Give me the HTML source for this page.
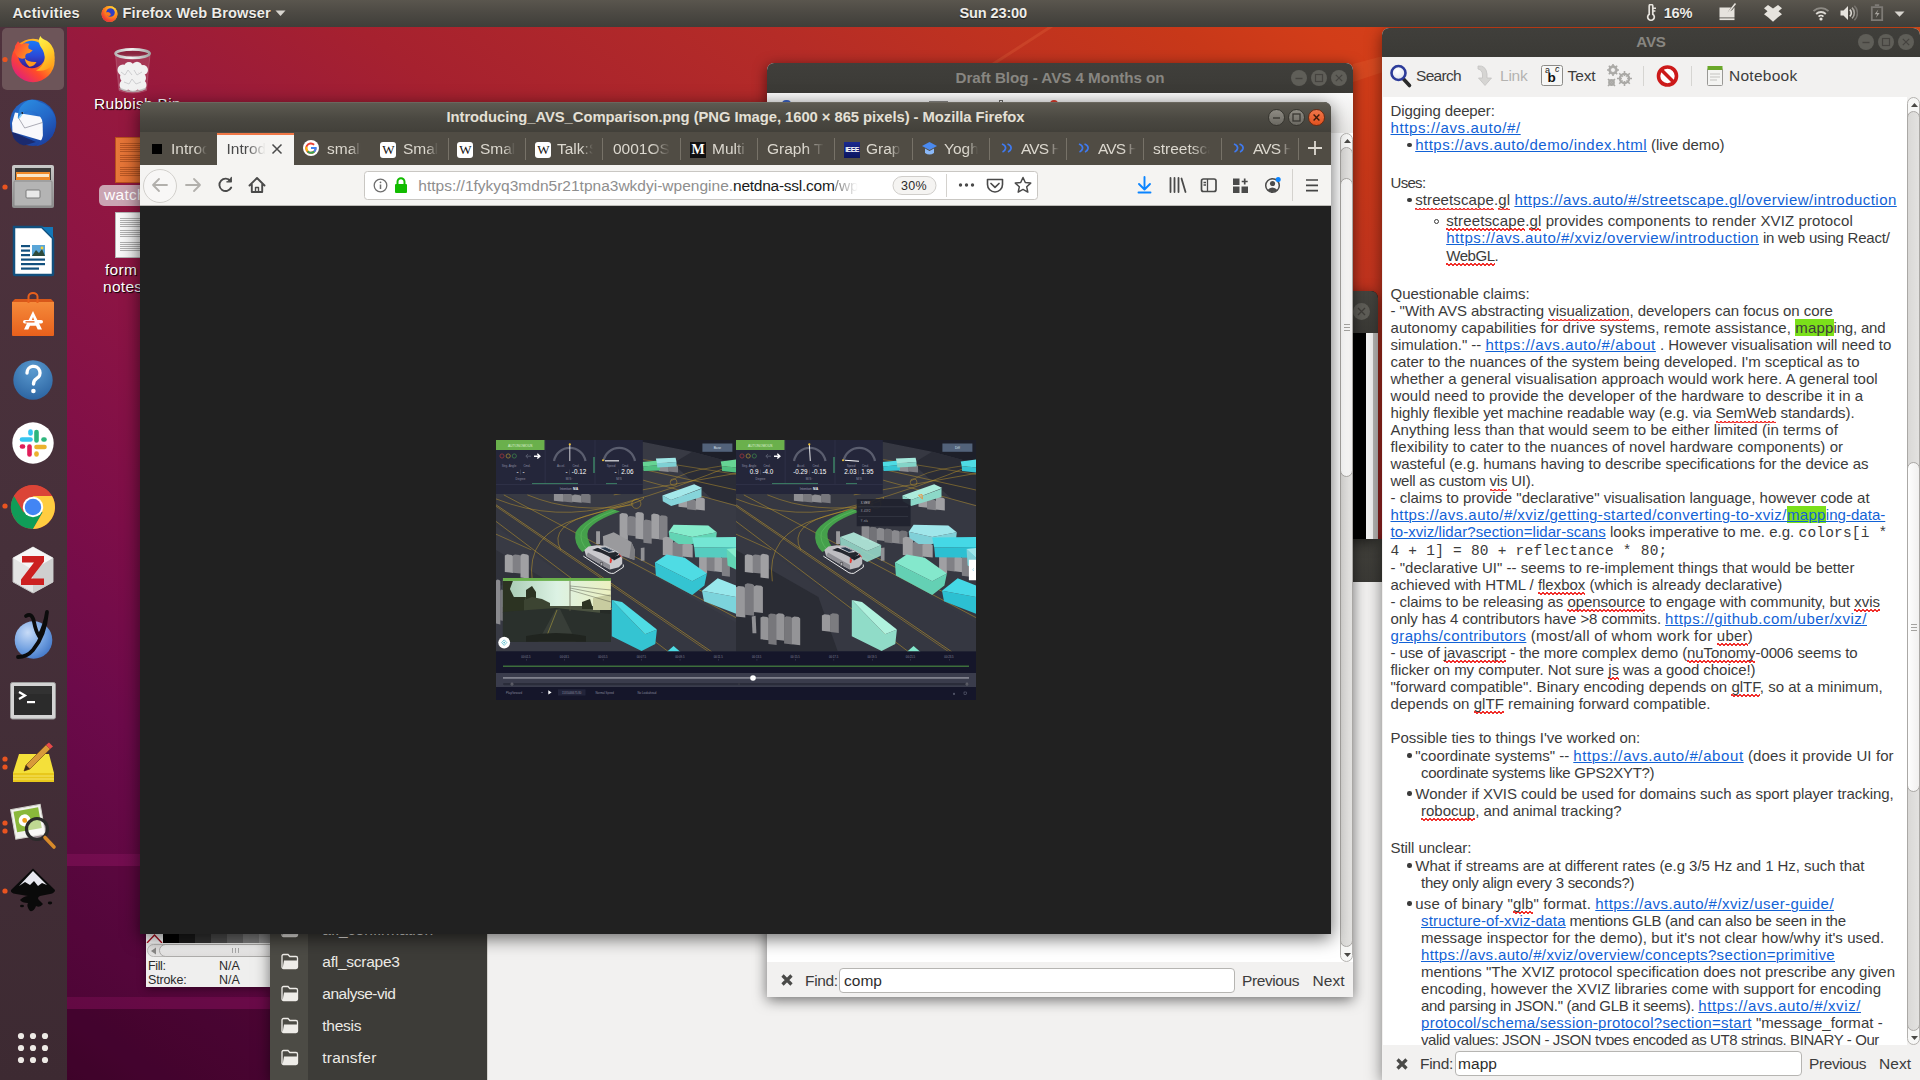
<!DOCTYPE html>
<html><head><meta charset="utf-8"><title>desktop</title>
<style>
*{box-sizing:border-box;margin:0;padding:0}
html,body{width:1920px;height:1080px;overflow:hidden;background:#5a0a3c;font-family:"Liberation Sans",sans-serif;}
.abs{position:absolute}
#wall{position:absolute;left:0;top:0;width:1920px;height:1080px;
 background:linear-gradient(36deg,#47042f 0%,#54063a 5%,#6c0a4a 18%,#7d0e48 26%,#8c1444 35%,#97193e 44%,#a6212f 53%,#b52c27 65%,#c83819 77%,#d23d19 81%,#e04e1a 100%);}
#topbar{position:absolute;left:0;top:0;width:1920px;height:27px;background:linear-gradient(#5a564e 0%,#4d4a44 45%,#3f3e39 100%);color:#eeece8;font-weight:bold;font-size:14.600px;z-index:100}
#topbar span{position:absolute;top:5px;white-space:nowrap;text-shadow:0 1px 1px rgba(0,0,0,.6)}
#dock{position:absolute;left:0;top:27px;width:67px;height:1053px;background:#4a2f39;z-index:99}
.win{position:absolute;box-shadow:0 3px 14px rgba(0,0,0,.55)}
.tb{position:absolute;left:0;top:0;right:0;border-radius:7px 7px 0 0;color:#dfdbd2;font-weight:bold;font-size:15px;text-align:center}
.wbtn{position:absolute;width:17px;height:17px;border-radius:50%;background:#6b6962;border:1px solid #2c2b28}
</style></head><body>
<div id="wall"></div>
<!-- wallpaper bands -->
<div class="abs" style="left:67px;top:854px;width:420px;height:12px;background:rgba(160,30,110,.28)"></div>
<div class="abs" style="left:67px;top:866px;width:420px;height:214px;background:rgba(40,0,30,.12)"></div>
<div class="abs" style="left:67px;top:997px;width:420px;height:12px;background:rgba(150,20,100,.30)"></div>
<div class="abs" style="left:67px;top:1009px;width:420px;height:71px;background:rgba(30,0,20,.22)"></div>
<svg class="abs" id="ray1" style="left:0;top:0" width="1920" height="300"><path d="M990 66 L1052 26" stroke="rgba(255,150,90,.16)" stroke-width="3"/><path d="M1353 64 L1383 56 V72 L1353 82Z" fill="rgba(255,160,90,.12)"/></svg>
<!-- desktop icons -->
<svg class="abs" style="left:110px;top:45px" width="46" height="50" viewBox="110 45 46 50">
<defs><linearGradient id="rimg" x1="0" x2="1"><stop offset="0" stop-color="#b8b8b8"/><stop offset=".45" stop-color="#f4f4f4"/><stop offset="1" stop-color="#a4a4a4"/></linearGradient></defs>
<path d="M115.500 55 L119 90.500 Q132.700 95.500 146.500 90.500 L150 55Z" fill="rgba(255,255,255,.13)" stroke="rgba(255,255,255,.22)" stroke-width=".7"/>
<g fill="#f1f1f1"><circle cx="123" cy="70" r="5.500"/><circle cx="129" cy="67" r="5"/><circle cx="137" cy="67" r="5.200"/><circle cx="143" cy="70" r="5"/><circle cx="126" cy="77" r="6"/><circle cx="133" cy="74" r="6"/><circle cx="140" cy="78" r="6"/><circle cx="125" cy="85" r="5.500"/><circle cx="133" cy="85" r="6.500"/><circle cx="141" cy="85" r="5.500"/></g>
<g fill="none" stroke="#c9c9cc" stroke-width=".9"><path d="M121 72 l4 3 l3 -5 l4 5 M134 70 l3 5 l5 -3 M124 82 l5 2 l3 -5 l4 5 l5 -2"/></g>
<path d="M119.500 88.500 Q132.700 94.500 146 88.500" fill="none" stroke="#b9b9b9" stroke-width="1.600" opacity=".8"/>
<ellipse cx="132.600" cy="53.600" rx="17" ry="4.300" fill="rgba(125,45,65,.55)" stroke="url(#rimg)" stroke-width="2.800"/>
</svg>
<div class="abs" style="left:94px;top:95px;color:#fff;font-size:15.500px;white-space:nowrap;text-shadow:1px 1px 1px #000;letter-spacing:.3px">Rubbish Bin</div>
<div class="abs" style="left:115px;top:137px;width:40px;height:46px;background:linear-gradient(90deg,#e8783a,#d8652a);border:1px solid #b8501c"></div>
<div class="abs" style="left:120px;top:143px;width:30px;height:34px;background:repeating-linear-gradient(#8a3a12 0 1px,transparent 1px 2px);opacity:.5;-webkit-mask-image:linear-gradient(#000 0 26%,transparent 26% 33%,#000 33% 60%,transparent 60% 67%,#000 67%)"></div>
<div class="abs" style="left:99px;top:185px;width:70px;height:21px;border-radius:5px;background:rgba(222,214,217,.74);color:#fff;font-size:15.500px;padding:1px 5px;letter-spacing:.3px">watch</div>
<div class="abs" style="left:115px;top:212px;width:40px;height:46px;background:linear-gradient(90deg,#fafafa,#e4e4e4);border:1px solid #b4b4b4"></div>
<div class="abs" style="left:120px;top:218px;width:30px;height:34px;background:repeating-linear-gradient(#6a6a6a 0 1px,transparent 1px 2px);opacity:.5;-webkit-mask-image:linear-gradient(#000 0 26%,transparent 26% 33%,#000 33% 60%,transparent 60% 67%,#000 67%)"></div>
<div class="abs" style="left:105px;top:261px;color:#fff;font-size:15.500px;white-space:nowrap;text-shadow:1px 1px 1px #000;letter-spacing:.3px">form</div>
<div class="abs" style="left:103px;top:278px;color:#fff;font-size:15.500px;white-space:nowrap;text-shadow:1px 1px 1px #000;letter-spacing:.3px">notes</div>
<!-- inkscape fragment -->
<div class="abs" style="left:146px;top:920px;width:124px;height:67px;background:#efefee;box-shadow:0 2px 8px rgba(0,0,0,.4)">
 <div class="abs" style="left:0;top:14px;width:17px;height:9px;background:#fff"></div>
 <svg class="abs" style="left:0;top:12px" width="17" height="11"><path d="M1 11 L8.500 3 L16 11" stroke="#b01020" stroke-width="1.400" fill="none"/></svg>
 <div class="abs" style="left:17px;top:14px;width:16px;height:9px;background:#000"></div>
 <div class="abs" style="left:33px;top:14px;width:16px;height:9px;background:#1a1a1a"></div>
 <div class="abs" style="left:49px;top:14px;width:16px;height:9px;background:#333"></div>
 <div class="abs" style="left:65px;top:14px;width:16px;height:9px;background:#4d4d4d"></div>
 <div class="abs" style="left:81px;top:14px;width:16px;height:9px;background:#666"></div>
 <div class="abs" style="left:97px;top:14px;width:16px;height:9px;background:#808080"></div>
 <div class="abs" style="left:113px;top:14px;width:11px;height:9px;background:#999"></div>
 <div class="abs" style="left:1px;top:24px;width:130px;height:13px;border-radius:7px;background:#e4e3e2;border:1px solid #bdbcba"></div>
 <div class="abs" style="left:13px;top:24px;width:130px;height:13px;border-radius:7px;background:linear-gradient(#fafafa,#e0dfde);border:1px solid #aeadab"></div>
 <svg class="abs" style="left:4px;top:27px" width="7" height="8"><path d="M6 0.500 L1 4 L6 7.500Z" fill="#8a8987"/></svg>
 <div class="abs" style="left:86px;top:28px;width:8px;height:5px;background:repeating-linear-gradient(90deg,#aaa 0 1px,transparent 1px 3px)"></div>
 <div class="abs" style="left:2px;top:39px;font-size:12.500px;color:#2a2a2a;white-space:nowrap;letter-spacing:-0.371px">Fill:</div>
 <div class="abs" style="left:73px;top:39px;font-size:12.500px;color:#2a2a2a;white-space:nowrap;letter-spacing:-0.015px">N/A</div>
 <div class="abs" style="left:2px;top:53px;font-size:12.500px;color:#2a2a2a;white-space:nowrap;letter-spacing:-0.144px">Stroke:</div>
 <div class="abs" style="left:73px;top:53px;font-size:12.500px;color:#2a2a2a;white-space:nowrap;letter-spacing:-0.015px">N/A</div>
</div>
<!-- file manager -->
<div class="win" style="left:270px;top:539px;width:1140px;height:541px;background:#f2f1f0">
 <div class="abs" style="left:0;top:0;width:1140px;height:43px;background:linear-gradient(#42413c,#3b3a36);border-radius:6px 6px 0 0"></div>
 <div class="abs" style="left:0;top:43px;width:38px;height:498px;background:#4c4b45"></div>
 <div class="abs" style="left:38px;top:43px;width:179px;height:498px;background:#3d3c38"></div>
 <div class="abs" style="left:217px;top:43px;width:1px;height:498px;background:#d5d3cf"></div>
</div>
<svg class="abs" style="left:270px;top:900px" width="217" height="180" viewBox="270 900 217 180">
<defs><g id="fold"><path d="M0.500 2 a1.500 1.500 0 0 1 1.500 -1.500 h4.500 l1.800 2 h6.200 a1.500 1.500 0 0 1 1.500 1.500 v9 a1.500 1.500 0 0 1 -1.500 1.500 h-12.500 a1.500 1.500 0 0 1 -1.500 -1.500z" fill="none" stroke="#eeece8" stroke-width="1.300"/><path d="M2.500 6.500 h13.500 v7.500 h-14.800 z" fill="#eeece8"/></g></defs>
<use href="#fold" x="281.500" y="922"/><use href="#fold" x="281.500" y="954"/><use href="#fold" x="281.500" y="986"/><use href="#fold" x="281.500" y="1018"/><use href="#fold" x="281.500" y="1050"/>
</svg>
<div class="abs" style="left:322.300px;top:921.0px;font-size:15.500px;color:#eceae6;white-space:nowrap;letter-spacing:0.099px">afl_confirmation</div>
<div class="abs" style="left:322.300px;top:953.0px;font-size:15.500px;color:#eceae6;white-space:nowrap;letter-spacing:-0.249px">afl_scrape3</div>
<div class="abs" style="left:322.300px;top:985.0px;font-size:15.500px;color:#eceae6;white-space:nowrap;letter-spacing:-0.482px">analyse-vid</div>
<div class="abs" style="left:322.300px;top:1017.0px;font-size:15.500px;color:#eceae6;white-space:nowrap;letter-spacing:-0.250px">thesis</div>
<div class="abs" style="left:322.300px;top:1049.0px;font-size:15.500px;color:#eceae6;white-space:nowrap;letter-spacing:0.217px">transfer</div>
<!-- black window -->
<div class="win" style="left:1200px;top:291px;width:178px;height:248px;background:#000;border-radius:7px 7px 0 0">
 <div class="abs" style="left:0;top:0;width:178px;height:42px;background:linear-gradient(#45443f,#3a3935);border-radius:7px 7px 0 0"></div>
 <div class="abs" style="left:153px;top:12px;width:17px;height:17px;border-radius:50%;background:#5f5e58"></div>
 <svg class="abs" style="left:157px;top:16px" width="9" height="9"><path d="M1 1 L8 8 M8 1 L1 8" stroke="#403e3a" stroke-width="1.300"/></svg>
 <div class="abs" style="left:166px;top:42px;width:7px;height:206px;background:#f4f4f4"></div>
 <div class="abs" style="left:172.500px;top:42px;width:5.500px;height:206px;background:#b4b3b1"></div>
</div>
<!-- Draft Blog window -->
<div class="win" style="left:767px;top:63px;width:586px;height:934px;background:#fff;border-radius:7px 7px 0 0">
 <div class="tb" style="height:30px;background:linear-gradient(#403f3b,#3b3a36);color:#888681;font-size:15.200px;line-height:30px;"><span style="letter-spacing:-0.039px">Draft Blog - AVS 4 Months on</span></div>
 <div class="abs" style="left:524px;top:7px;width:16px;height:16px;border-radius:50%;background:#5f5e58"></div>
 <div class="abs" style="left:544px;top:7px;width:16px;height:16px;border-radius:50%;background:#5f5e58"></div>
 <div class="abs" style="left:564px;top:7px;width:16px;height:16px;border-radius:50%;background:#5f5e58"></div>
 <svg class="abs" style="left:523px;top:7px" width="60" height="16"><path d="M5.500 8.500 h7" stroke="#45433f" stroke-width="1.400"/><rect x="25.500" y="4.500" width="7" height="7" fill="none" stroke="#45433f" stroke-width="1.200"/><path d="M45.800 4.800 l6.400 6.400 M52.200 4.800 l-6.400 6.400" stroke="#45433f" stroke-width="1.200"/></svg>
 <div class="abs" style="left:0;top:30px;width:586px;height:40px;background:linear-gradient(#fafafa,#e9e8e6)"></div>
 <div class="abs" style="left:15px;top:36.500px;width:9px;height:4px;border-radius:4px 4px 0 0;background:#3a62c4"></div>
 <div class="abs" style="left:162px;top:37.500px;width:19px;height:3px;background:#8a8986"></div>
 <div class="abs" style="left:232px;top:36.500px;width:4px;height:4px;border:1px solid #6a6966"></div>
 <div class="abs" style="left:283px;top:37px;width:8px;height:4px;border-radius:4px 4px 0 0;background:#d83a2a"></div>
 <div class="abs" style="left:0;top:899px;width:586px;height:35px;background:#f2f1f0"></div>
 <!-- scrollbar -->
 <div class="abs" style="left:573px;top:70px;width:13px;height:829px;background:#f7f7f6;border:1px solid #b4b2af;border-radius:6.500px"></div>
 <div class="abs" style="left:573px;top:84px;width:13px;height:800px;background:linear-gradient(90deg,#d9d8d6,#e3e2e0);border:1px solid #aaa8a5;border-radius:6.500px"></div>
 <svg class="abs" style="left:576.500px;top:75.500px" width="7" height="4"><path d="M0 4 L3.500 0 L7 4Z" fill="#4a4946"/></svg>
 <div class="abs" style="left:573px;top:115px;width:13px;height:299px;border-radius:6.500px;background:linear-gradient(90deg,#fdfdfd,#f1f0ef);border:1px solid #aaa8a5"></div>
 <div class="abs" style="left:576.500px;top:261px;width:6px;height:8px;background:repeating-linear-gradient(#a4a3a0 0 1px,transparent 1px 3px)"></div>
 <svg class="abs" style="left:576.500px;top:889.500px" width="7" height="4"><path d="M0 0 L3.500 4 L7 0Z" fill="#4a4946"/></svg>
 <!-- find bar -->
 <svg class="abs" style="left:14px;top:911px" width="12" height="12"><path d="M1.500 1.500 L10.500 10.500 M10.500 1.500 L1.500 10.500" stroke="#4a4a48" stroke-width="3.200"/></svg>
 <div class="abs" style="left:38px;top:909px;font-size:15.500px;color:#3c3c3c;white-space:nowrap;letter-spacing:-0.334px">Find:</div>
 <div class="abs" style="left:72px;top:905px;width:396px;height:25px;border:1px solid #b6b5b2;border-radius:4px;background:#fff;font-size:15.500px;color:#2c2c2c;padding:3px 0 0 4px"><span style="letter-spacing:0.023px">comp</span></div>
 <div class="abs" style="left:475px;top:909px;font-size:15.500px;color:#3c3c3c;white-space:nowrap;letter-spacing:-0.414px">Previous</div>
 <div class="abs" style="left:545.500px;top:909px;font-size:15.500px;color:#3c3c3c;white-space:nowrap;letter-spacing:0.031px">Next</div>
</div>
<!-- Firefox window -->
<style>
.tab{position:absolute;top:0;height:33px;width:77px;font-size:15.500px;color:#dcd8cf;white-space:nowrap;overflow:hidden}
.tab .t{position:absolute;top:8px;-webkit-mask-image:linear-gradient(90deg,#000 68%,transparent 100%);mask-image:linear-gradient(90deg,#000 68%,transparent 100%);overflow:hidden}
.tsep{position:absolute;top:6px;width:1px;height:22px;background:#777268}
.wico{position:absolute;top:9.500px;width:16px;height:16px;border-radius:3px;background:#fff;color:#111;font-family:"Liberation Serif",serif;font-size:13px;line-height:16px;text-align:center;letter-spacing:-1px}
</style>
<div class="win" style="left:140px;top:102px;width:1191px;height:832px;background:#212121;border-radius:7px 7px 0 0;box-shadow:0 4px 18px rgba(0,0,0,.6)">
 <div class="tb" style="height:30px;background:linear-gradient(#5d5a51,#4a4841 55%,#42403a);color:#e4e0d6;font-size:14.800px;line-height:29px;border-top:1px solid #6a675e"><span style="letter-spacing:-0.054px">Introducing_AVS_Comparison.png (PNG Image, 1600 × 865 pixels) - Mozilla Firefox</span></div>
 <!-- window buttons -->
 <div class="abs" style="left:1128px;top:6.700px;width:17px;height:17px;border-radius:50%;background:linear-gradient(#8e8b83,#6b6962);border:1px solid #36352f"></div>
 <div class="abs" style="left:1148px;top:6.700px;width:17px;height:17px;border-radius:50%;background:linear-gradient(#8e8b83,#6b6962);border:1px solid #36352f"></div>
 <div class="abs" style="left:1168px;top:6.700px;width:17px;height:17px;border-radius:50%;background:linear-gradient(#f0764a,#e2521f);border:1px solid #6a2a12"></div>
 <svg class="abs" style="left:1128px;top:6.700px" width="60" height="17"><path d="M5 9 h7" stroke="#3a3833" stroke-width="1.400"/><rect x="25" y="5" width="7" height="7" fill="none" stroke="#3a3833" stroke-width="1.300"/><path d="M45.600 5.600 l5.800 5.800 M51.400 5.600 l-5.800 5.800" stroke="#3c1a0a" stroke-width="1.400"/></svg>
 <!-- tab bar -->
 <div class="abs" style="left:0;top:30px;width:1191px;height:33px;background:#504c44"></div>
 <div class="abs" style="left:0;top:30px;width:1191px;height:33px">
  <div class="tab" style="left:0"><div class="abs" style="left:12px;top:12px;width:10px;height:10px;background:#000"></div><div class="t" style="left:31px;width:36px">Introducing</div></div>
  <div class="tab" style="left:77px;top:1px;height:32px;background:#f5f4f2;color:#4a4a4a;border-top:2px solid #f07746"><div class="t" style="left:9.500px;width:40px;top:5px;-webkit-mask-image:linear-gradient(90deg,#000 50%,transparent 96%)">Introducing</div><svg class="abs" style="left:54px;top:8px" width="12" height="12"><path d="M1.500 1.500 L10.500 10.500 M10.500 1.500 L1.500 10.500" stroke="#4a4a4a" stroke-width="1.500"/></svg></div>
  <div class="tab" style="left:154px"><svg class="abs" style="left:9px;top:8px" width="16" height="16" viewBox="0 0 16 16"><circle cx="8" cy="8" r="8" fill="#fff"/><path d="M12.600 8.200 a4.700 4.700 0 1 1 -1.500 -3.500" fill="none" stroke="#ea4335" stroke-width="2"/><path d="M4.600 11.300 a4.700 4.700 0 0 1 -1.100 -4.600" fill="none" stroke="#fbbc05" stroke-width="2"/><path d="M11.300 11.600 a4.700 4.700 0 0 1 -6.700 -0.300" fill="none" stroke="#34a853" stroke-width="2"/><path d="M8 8 h4.700 a4.700 4.700 0 0 1 -1.400 3.600" fill="none" stroke="#4285f4" stroke-width="2"/></svg><div class="t" style="left:33px;width:34px">small</div></div>
  <div class="tab" style="left:231px"><div class="wico" style="left:9px">W</div><div class="t" style="left:32px;width:35px">Small</div></div>
  <div class="tab" style="left:308px"><div class="wico" style="left:9px">W</div><div class="t" style="left:32px;width:35px">Small</div></div>
  <div class="tab" style="left:385px"><div class="wico" style="left:10px">W</div><div class="t" style="left:32px;width:36px">Talk:S</div></div>
  <div class="tab" style="left:462px"><div class="t" style="left:11px;width:57px">0001OS-I</div></div>
  <div class="tab" style="left:539px"><div class="wico" style="left:11px;background:#111;color:#fff;border-radius:0;font-weight:bold;letter-spacing:0;font-size:14px">M</div><div class="t" style="left:33px;width:35px">Multi</div></div>
  <div class="tab" style="left:616px"><div class="t" style="left:11px;width:57px">Graph Th</div></div>
  <div class="tab" style="left:693px"><div class="abs" style="left:11px;top:9.500px;width:16px;height:16px;background:linear-gradient(#1b2a8e,#0c1560);color:#fff;font-size:7px;font-weight:bold;line-height:16px;text-align:center;letter-spacing:-.6px;overflow:hidden">IEEE</div><div class="t" style="left:33px;width:35px">Graph</div></div>
  <div class="tab" style="left:770px"><svg class="abs" style="left:11px;top:8px" width="17" height="17" viewBox="0 0 17 17"><path d="M8.500 2 L16 6 L8.500 10 L1 6Z" fill="#4a8af0"/><path d="M4 8.500 V13 Q8.500 16 13 13 V8.500 L8.500 11Z" fill="#8ab8f8"/></svg><div class="t" style="left:34px;width:34px">Yogh</div></div>
  <div class="tab" style="left:847px"><svg class="abs" style="left:14px;top:11px" width="12" height="10" viewBox="0 0 12 10"><path d="M1 1 q4 1.500 3.500 4.500 q-.5 2.500 -3 3.500 M6.500 1 q4 1.500 3.500 4.500 q-.5 2.500 -3 3.500" fill="none" stroke="#3f7af0" stroke-width="1.800"/></svg><div class="t" style="left:34px;width:38px;letter-spacing:-.9px">AVS Hi</div></div>
  <div class="tab" style="left:924px"><svg class="abs" style="left:14px;top:11px" width="12" height="10" viewBox="0 0 12 10"><path d="M1 1 q4 1.500 3.500 4.500 q-.5 2.500 -3 3.500 M6.500 1 q4 1.500 3.500 4.500 q-.5 2.500 -3 3.500" fill="none" stroke="#3f7af0" stroke-width="1.800"/></svg><div class="t" style="left:34px;width:38px;letter-spacing:-.9px">AVS Hi</div></div>
  <div class="tab" style="left:1001px"><div class="t" style="left:12px;width:57px">streetsca</div></div>
  <div class="tab" style="left:1078px"><svg class="abs" style="left:15px;top:11px" width="12" height="10" viewBox="0 0 12 10"><path d="M1 1 q4 1.500 3.500 4.500 q-.5 2.500 -3 3.500 M6.500 1 q4 1.500 3.500 4.500 q-.5 2.500 -3 3.500" fill="none" stroke="#3f7af0" stroke-width="1.800"/></svg><div class="t" style="left:35px;width:38px;letter-spacing:-.9px">AVS Hi</div></div>
  <div class="tsep" style="left:308px"></div><div class="tsep" style="left:385px"></div><div class="tsep" style="left:462px"></div><div class="tsep" style="left:540px"></div><div class="tsep" style="left:617px"></div><div class="tsep" style="left:694px"></div><div class="tsep" style="left:772px"></div><div class="tsep" style="left:849px"></div><div class="tsep" style="left:926px"></div><div class="tsep" style="left:1003px"></div><div class="tsep" style="left:1081px"></div><div class="tsep" style="left:1158px"></div>
  <svg class="abs" style="left:1167px;top:8px" width="16" height="16"><path d="M8 1 V15 M1 8 H15" stroke="#dedad2" stroke-width="1.800"/></svg>
 </div>
 <!-- nav bar -->
 <div class="abs" style="left:0;top:63px;width:1191px;height:41px;background:#f5f4f2;border-bottom:1px solid #bdbcb8"></div>
 <div class="abs" style="left:3px;top:66.500px;width:34px;height:34px;border-radius:50%;border:1px solid #d2d0cc;background:#f8f7f6"></div>
 <svg class="abs" style="left:0;top:63px" width="1191" height="40" viewBox="140 165 1191 40">
  <g fill="none" stroke="#b2b0ac" stroke-width="1.800" stroke-linecap="round" stroke-linejoin="round"><path d="M167 185 H153 M159 179 L153 185 L159 191"/><path d="M186 185 H200 M194 179 L200 185 L194 191"/></g>
  <g fill="none" stroke="#4a4a4a" stroke-width="1.900" stroke-linecap="round" stroke-linejoin="round"><path d="M230.500 181 A6.200 6.200 0 1 0 231.200 187.500"/><path d="M231.300 177.300 V181.800 H226.800" fill="#4a4a4a" stroke-width="1.200"/>
  <path d="M249.500 185.500 L257 178 L264.500 185.500 M251.800 184.500 V192 H262.200 V184.500"/><rect x="255.500" y="187.500" width="3" height="4.500" stroke-width="1.400"/></g>
  <!-- url bar -->
  <rect x="364.500" y="171.500" width="673" height="28" rx="3" fill="#fff" stroke="#c9c7c3"/>
  <circle cx="380.500" cy="185.500" r="6.300" fill="none" stroke="#6e6e6e" stroke-width="1.300"/><path d="M380.500 184.500 V189" stroke="#6e6e6e" stroke-width="1.500"/><circle cx="380.500" cy="182.300" r=".9" fill="#6e6e6e"/>
  <rect x="395" y="184" width="12" height="9" rx="1" fill="#12bc00"/><path d="M397.500 184 v-2.300 a3.500 3.500 0 0 1 7 0 v2.300" fill="none" stroke="#12bc00" stroke-width="2"/>
  <rect x="893" y="176.500" width="43" height="18" rx="9" fill="#f5f4f2" stroke="#d0cecb"/>
  <path d="M946.500 174 V197" stroke="#d4d2ce"/>
  <circle cx="960.500" cy="185" r="1.700" fill="#4a4a4a"/><circle cx="966.500" cy="185" r="1.700" fill="#4a4a4a"/><circle cx="972.500" cy="185" r="1.700" fill="#4a4a4a"/>
  <path d="M987.500 179.500 h15 v5 a7.500 7.500 0 0 1 -15 0z" fill="none" stroke="#4a4a4a" stroke-width="1.600" stroke-linejoin="round"/><path d="M991 183.500 l4 3.800 l4 -3.800" fill="none" stroke="#4a4a4a" stroke-width="1.700" stroke-linecap="round" stroke-linejoin="round"/>
  <path d="M1023 177.500 l2.300 5 l5.400 .6 l-4 3.700 l1.100 5.300 l-4.800 -2.700 l-4.800 2.700 l1.100 -5.300 l-4 -3.700 l5.400 -.6z" fill="none" stroke="#4a4a4a" stroke-width="1.500" stroke-linejoin="round"/>
  <!-- right icons -->
  <path d="M1144.500 177 V189 M1139 184 L1144.500 189.500 L1150 184 M1138.500 192.500 H1150.500" fill="none" stroke="#0a84ff" stroke-width="1.900" stroke-linecap="round" stroke-linejoin="round"/>
  <path d="M1170.500 178 V192 M1174.500 178 V192 M1178.500 178 V192 M1181.500 178.500 L1185.500 192" fill="none" stroke="#4a4a4a" stroke-width="1.800" stroke-linecap="round"/>
  <rect x="1201.500" y="179" width="14.500" height="12.500" rx="2" fill="none" stroke="#4a4a4a" stroke-width="1.700"/><path d="M1207.500 179 V191.500 M1203.500 182.500 h2.500 M1203.500 185 h2.500" stroke="#4a4a4a" stroke-width="1.300"/>
  <rect x="1233" y="178.500" width="6.500" height="6.500" fill="#4a4a4a"/><rect x="1233" y="186.500" width="6.500" height="6.500" fill="#4a4a4a"/><rect x="1241.500" y="186.500" width="6.500" height="6.500" fill="#4a4a4a"/><path d="M1244.700 178.500 v6 M1241.700 181.500 h6" stroke="#4a4a4a" stroke-width="1.700"/>
  <circle cx="1272.500" cy="185.500" r="6.800" fill="none" stroke="#4a4a4a" stroke-width="1.500"/><circle cx="1272.500" cy="183.500" r="2.600" fill="#4a4a4a"/><path d="M1267.500 190 q5 -5 10 0 q-5 4 -10 0z" fill="#4a4a4a"/><circle cx="1278.200" cy="179.600" r="2.500" fill="#0a84ff"/>
  <path d="M1292.500 169 V201" stroke="#d4d2ce"/>
  <path d="M1306 180 h12 M1306 185.300 h12 M1306 190.600 h12" stroke="#454545" stroke-width="1.700"/>
 </svg>
 <div class="abs" style="left:278.300px;top:74.500px;font-size:15.500px;color:#8e8e8e;white-space:nowrap;letter-spacing:0.007px">https://1fykyq3mdn5r21tpna3wkdyi-wpengine.</div>
 <div class="abs" style="left:593.100px;top:74.500px;font-size:15.500px;color:#1a1a1a;white-space:nowrap;letter-spacing:-0.258px">netdna-ssl.com</div>
 <div class="abs" style="left:694.600px;top:74.500px;font-size:15.500px;color:#8e8e8e;white-space:nowrap;width:24px;overflow:hidden;-webkit-mask-image:linear-gradient(90deg,#000 20%,transparent 95%)">/wp-content</div>
 <div class="abs" style="left:761px;top:77px;font-size:12.500px;color:#2a2a2a;letter-spacing:.3px">30%</div>
</div>
<!-- centre image -->
<svg class="abs" style="left:496px;top:439.500px;z-index:5" width="480" height="260" viewBox="0 0 480 260" font-family="Liberation Sans, sans-serif">
<defs><clipPath id="cp"><rect x="0" y="0" width="240" height="211.500"/></clipPath>
<linearGradient id="sky" x1="0" y1="0" x2="1" y2="0"><stop offset="0" stop-color="#a4c8b0"/><stop offset=".5" stop-color="#dcf2e4"/><stop offset="1" stop-color="#ecf0c0"/></linearGradient></defs>
<rect width="480" height="260" fill="#15162a"/>
<g clip-path="url(#cp)"><rect x="0" y="0" width="240" height="212" fill="#383a44"/><path d="M137.4 0.0 L240.0 0.0 L240.0 23.5 L196.2 11.8Z" fill="#1d1f29" /><path d="M196.2 11.8 L240.0 23.5 L240.0 64.8 L215.9 58.9 L176.6 23.5Z" fill="#2a2c36" /><path d="M0.0 58.9 L11.8 54.9 L240.0 182.5 L240.0 211.9 L172.7 211.9 L0.0 86.3Z" fill="#353741" /><path d="M0.0 109.9 L58.9 145.2 L0.0 145.2Z" fill="#30323b" /><path d="M0.0 64.8 L215.9 211.9" fill="none" stroke="#c29a2c" stroke-width="0.6" opacity="0.95"/><path d="M0.0 66.3 L212.9 211.9" fill="none" stroke="#c29a2c" stroke-width="0.5" opacity="0.95"/><path d="M0.0 81.4 L172.7 211.9" fill="none" stroke="#c29a2c" stroke-width="0.55" opacity="0.95"/><path d="M7.8 54.9 L240.0 177.6" fill="none" stroke="#c29a2c" stroke-width="0.55" opacity="0.95"/><path d="M125.6 109.9 L240.0 168.8" fill="none" stroke="#c29a2c" stroke-width="0.55" opacity="0.95"/><path d="M117.7 54.9 L240.0 33.4" fill="none" stroke="#c29a2c" stroke-width="0.5" opacity="0.95"/><path d="M147.2 29.4 L240.0 50.0" fill="none" stroke="#c29a2c" stroke-width="0.5" opacity="0.95"/><path d="M147.2 40.2 L240.0 65.7" fill="none" stroke="#c29a2c" stroke-width="0.5" opacity="0.95"/><path d="M147.2 19.6 L240.0 34.3" fill="none" stroke="#c29a2c" stroke-width="0.45" opacity="0.95"/><path d="M0.0 94.2 L35.3 109.9" fill="none" stroke="#c29a2c" stroke-width="0.5" opacity="0.95"/><path d="M 36.3 141.3 Q 29.4 94.2 82.4 78.5 T 141.3 58.9" fill="none" stroke="#c29a2c" stroke-width="0.55" opacity="0.95"/><path d="M 64.8 109.9 Q 51.0 84.4 102.0 72.6 T 147.2 56.9" fill="none" stroke="#c29a2c" stroke-width="0.55" opacity="0.95"/><path d="M 0.0 58.9 Q 58.9 82.4 121.7 64.8 T 240.0 23.5" fill="none" stroke="#c29a2c" stroke-width="0.5" opacity="0.95"/><path d="M 31.4 54.9 Q 78.5 74.6 137.4 64.8" fill="none" stroke="#c29a2c" stroke-width="0.5" opacity="0.95"/><path d="M 174.6 41.2 Q 188.4 31.4 215.9 27.5 T 240.0 19.6" fill="none" stroke="#c29a2c" stroke-width="0.45" opacity="0.95"/><circle cx="140.3" cy="63.8" r="4.6" fill="none" stroke="#c29a2c" stroke-width=".5"/><circle cx="177.6" cy="42.2" r="3.4" fill="none" stroke="#c29a2c" stroke-width=".45"/><path d="M115.8 69.1 Q88.3 78.5 79.5 92.2 Q77.5 104.0 86.3 111.9 L96.2 106.9 Q89.3 98.1 92.2 90.3 Q98.1 80.5 124.0 71.6Z" fill="#46a94c" opacity=".92"/><path d="M119.7 70.3 Q92.2 79.5 85.4 92.2 Q83.4 102.0 91.2 109.5" fill="none" stroke="#6fd070" stroke-width=".5" opacity=".8"/><path d="M57.9 53.1 L60.6 52.0 L65.6 52.5 L67.4 53.9 L67.4 61.7 L57.9 60.7Z" fill="#8e8e92"/><path d="M67.0 54.6 L69.7 53.4 L74.7 54.0 L76.5 55.3 L76.5 62.4 L67.0 61.4Z" fill="#77777c"/><path d="M76.0 55.8 L78.8 54.6 L83.8 55.2 L85.6 56.6 L85.6 62.8 L76.0 61.8Z" fill="#8e8e92"/><path d="M85.1 54.5 L87.8 53.3 L92.8 53.9 L94.6 55.2 L94.6 63.2 L85.1 62.3Z" fill="#77777c"/><path d="M162.9 22.9 L165.7 21.7 L170.8 22.3 L172.7 23.7 L172.7 31.9 L162.9 30.9Z" fill="#8c8c90"/><path d="M172.2 25.2 L175.0 24.0 L180.1 24.6 L182.0 25.9 L182.0 32.5 L172.2 31.5Z" fill="#7a7a7f"/><path d="M182.5 56.4 L185.1 55.3 L189.8 55.8 L191.6 57.2 L191.6 67.7 L182.5 66.7Z" fill="#a0a0a3"/><path d="M191.1 60.4 L193.7 59.2 L198.5 59.8 L200.2 61.2 L200.2 70.3 L191.1 69.3Z" fill="#808085"/><path d="M199.8 58.3 L202.4 57.1 L207.1 57.7 L208.8 59.1 L208.8 70.6 L199.8 69.6Z" fill="#a0a0a3"/><path d="M123.6 74.2 L126.0 73.1 L130.4 73.6 L131.9 75.0 L131.9 99.9 L123.6 98.9Z" fill="#a0a0a3"/><path d="M131.5 77.1 L133.9 75.9 L138.3 76.5 L139.9 77.9 L139.9 96.3 L131.5 95.3Z" fill="#808085"/><path d="M139.5 73.2 L141.8 72.0 L146.2 72.6 L147.8 73.9 L147.8 99.4 L139.5 98.4Z" fill="#a0a0a3"/><path d="M147.4 80.8 L149.7 79.6 L154.1 80.2 L155.7 81.6 L155.7 103.7 L147.4 102.7Z" fill="#808085"/><path d="M155.3 74.8 L157.7 73.6 L162.0 74.2 L163.6 75.6 L163.6 99.3 L155.3 98.4Z" fill="#a0a0a3"/><path d="M163.2 76.4 L165.6 75.2 L169.9 75.8 L171.5 77.1 L171.5 100.4 L163.2 99.4Z" fill="#808085"/><path d="M106.9 96.2 L117.7 92.2 L135.4 102.0 L138.9 109.9 L138.3 120.1 L125.6 115.8 L107.5 106.9Z" fill="#9a9a9d" /><path d="M135.4 102.0 L138.9 109.9 L138.3 120.1 L133.4 117.7Z" fill="#7c7c80" /><path d="M166.8 98.0 L169.7 96.8 L175.1 97.4 L177.1 98.8 L177.1 115.9 L166.8 114.9Z" fill="#a0a0a3"/><path d="M176.6 102.7 L179.6 101.5 L184.9 102.1 L186.9 103.5 L186.9 119.9 L176.6 118.9Z" fill="#808085"/><path d="M186.4 104.4 L189.4 103.2 L194.8 103.8 L196.7 105.2 L196.7 117.5 L186.4 116.5Z" fill="#a0a0a3"/><path d="M203.1 114.6 L205.4 113.4 L209.6 114.0 L211.1 115.4 L211.1 133.2 L203.1 132.2Z" fill="#a0a0a3"/><path d="M210.7 116.4 L213.0 115.2 L217.2 115.8 L218.7 117.2 L218.7 131.5 L210.7 130.5Z" fill="#808085"/><path d="M218.3 117.4 L220.6 116.3 L224.8 116.9 L226.3 118.2 L226.3 132.3 L218.3 131.3Z" fill="#a0a0a3"/><path d="M225.9 116.4 L228.2 115.2 L232.4 115.8 L233.9 117.2 L233.9 136.8 L225.9 135.8Z" fill="#808085"/><path d="M8.8 115.5 L11.2 114.3 L15.5 114.9 L17.1 116.3 L17.1 132.9 L8.8 131.9Z" fill="#a0a0a3"/><path d="M16.7 115.6 L19.0 114.4 L23.4 115.0 L24.9 116.4 L24.9 133.6 L16.7 132.7Z" fill="#808085"/><path d="M24.5 115.0 L26.9 113.8 L31.2 114.4 L32.8 115.7 L32.8 138.5 L24.5 137.5Z" fill="#a0a0a3"/><path d="M100.1 91.2 L104.0 91.2 L104.0 104.0 L100.1 104.0Z" fill="#9a9a9d" /><path d="M144.8 107.9 L148.5 107.5 L148.5 120.7 L144.8 120.7Z" fill="#909094" /><path d="M0.0 140.6 L1.2 139.4 L3.5 140.0 L4.3 141.4 L4.3 184.5 L0.0 183.6Z" fill="#8a8a8e"/><path d="M4.1 150.8 L5.4 149.6 L7.6 150.2 L8.4 151.6 L8.4 181.2 L4.1 180.2Z" fill="#76767a"/><path d="M147.2 26.5 L163.9 25.1 L163.9 30.4 L147.6 31.0Z" fill="#4fbf80" opacity="1"/><path d="M146.2 22.0 L162.9 20.6 L163.9 25.1 L147.2 26.5Z" fill="#66d494" opacity="1"/><path d="M160.9 23.2 L180.5 22.0 L180.5 26.5 L161.3 27.5Z" fill="#7fd0d4" opacity="1"/><path d="M159.9 18.6 L179.6 17.7 L180.5 22.0 L160.9 23.2Z" fill="#9fe6e6" opacity="1"/><path d="M225.7 25.9 L240.0 27.5 L240.0 32.4 L226.1 31.0Z" fill="#4fbf80" opacity="1"/><path d="M224.7 21.6 L240.0 19.6 L240.0 27.5 L225.7 25.9Z" fill="#66d494" opacity="1"/><path d="M166.4 55.5 L175.0 59.9 L205.5 48.7 L205.5 56.9 L175.2 65.9 L166.8 61.2Z" fill="#86d4da" opacity="1"/><path d="M166.4 55.5 L198.2 44.2 L206.4 48.1 L175.0 59.9Z" fill="#a4e8ea" opacity="1"/><path d="M172.7 91.8 L196.2 97.1 L220.8 92.2 L220.2 98.1 L196.2 104.0 L182.5 104.0 L173.5 98.1Z" fill="#62d4b4" opacity="1"/><path d="M172.7 91.8 L177.6 84.8 L212.3 85.6 L220.8 92.2 L196.2 97.1Z" fill="#86eccc" opacity="1"/><path d="M198.2 107.5 L240.0 106.9 L240.0 117.7 L199.2 117.3Z" fill="#56ccc0" opacity="1"/><path d="M196.2 97.5 L240.0 97.1 L240.0 106.9 L198.2 107.5Z" fill="#74e6d4" opacity="1"/><path d="M230.6 108.9 L240.0 117.7 L240.0 129.5 L231.6 125.6Z" fill="#62d4b4" opacity="1"/><path d="M230.6 108.9 L240.0 107.9 L240.0 117.7Z" fill="#86eccc" opacity="1"/><path d="M158.9 122.6 L196.2 141.3 L210.9 133.4 L208.4 145.6 L196.2 155.0 L159.9 135.4Z" fill="#34c4d2" opacity="1"/><path d="M158.9 122.6 L170.7 114.4 L188.8 117.7 L210.9 133.4 L196.2 141.3Z" fill="#4fdce4" opacity="1"/><path d="M206.0 150.7 L240.0 157.0 L240.0 173.7 L208.0 161.3Z" fill="#7cd4dc" opacity="1"/><path d="M206.0 150.7 L221.7 138.3 L240.0 145.6 L240.0 157.0Z" fill="#98e8ec" opacity="1"/><path d="M115.8 159.9 L149.1 194.3 L160.9 189.4 L159.3 204.1 L145.6 211.1 L115.8 196.2Z" fill="#34c4d2" opacity="1"/><path d="M115.8 159.9 L126.0 162.1 L160.9 189.4 L149.1 194.3Z" fill="#4fdce4" opacity="1"/><path d="M170.7 211.9 L177.6 206.0 L184.5 211.9Z" fill="#4fdce4" /><path d="M87.3 116.1 L112.9 132.7 Q115.5 133.8 117.9 133.3 L127.3 127.2 L127.3 124.5" fill="none" stroke="#fff" stroke-width=".9" stroke-linejoin="round"/><path d="M88.4 109.9 L92.3 106.6 L100.7 105.2 L109.6 105.8 L121.2 111.6 L126.2 116.6 L126.2 123.8 L122.9 127.2 L114.0 129.4 L107.3 126.1 L90.1 116.1Z" fill="#c9c9cd"/><path d="M90.1 116.1 L107.3 126.1 L114.0 129.4 L114.0 125.0 L106.0 120.5 L92.0 112.5Z" fill="#8e8e94"/><path d="M96.2 109.9 L102.9 107.2 L109.6 106.6 L118.4 111.1 L122.9 113.8 L116.2 119.4 L112.9 116.6 L105.1 112.7Z" fill="#23272e"/><path d="M100.7 107.2 L109.6 106.3 L119.6 111.9 L112.9 112.7Z" fill="#dcdce0"/><path d="M104.0 107.7 L109.6 107.2 L117.3 111.1 L112.9 111.9Z" fill="#2a3a4c"/><path d="M116.2 117.8 L124.0 114.4 L124.8 116.7 L117.9 120.6Z" fill="#1a2028"/><path d="M114.0 117.2 L116.2 120.0 L115.1 123.3 L113.7 122.8Z" fill="#e0403a"/><path d="M122.9 113.3 L125.7 116.6 L125.4 117.7 L123.2 114.9Z" fill="#c03a3a"/><ellipse cx="105.5" cy="124" rx="1.8" ry="2.2" fill="#55555a"/><ellipse cx="105.500" cy="124" rx=".9" ry="1.200" fill="#b8b8bc"/><rect x="6.900" y="138" width="108" height="63.800" fill="#262b27"/><rect x="6.900" y="140" width="108" height="27" fill="url(#sky)"/><rect x="6.900" y="138" width="108" height="2.900" fill="#6ab04c"/><path d="M6.900 141 h10 l-3 8 l4 8 l12 0 v16 h-23z" fill="#2c3322"/><path d="M30 150 l6 -4 l4 6 v10 h-10z" fill="#2c3322"/><path d="M28 160 l8 -3 l10 2 l8 4 v8 h-26z" fill="#3c4432"/><path d="M54 166 h50 v8 h-50z" fill="#4a5240"/><path d="M97 158 l17.900 -4 v16 h-17.900z" fill="#c8cca0"/><path d="M86 162 l8 -3 l3 10 h-11z" fill="#2c3322"/><path d="M6.900 172 L60 168 L114.900 174 V201.800 H6.900Z" fill="#2a302c"/><path d="M42 201.800 L60 169 L64 169 L80 201.800Z" fill="#383e38"/><path d="M50 198 L61 170" stroke="#a89a3a" stroke-width=".6"/><path d="M74 141 v30" stroke="#5a5a48" stroke-width=".7"/><path d="M74 146 L114.900 150 M74 148 L114.900 156 M74 150 L114.900 162" stroke="#3a3a30" stroke-width=".4"/><path d="M30 196 q30 -6 60 0 v5.800 h-60z" fill="#20241f"/><circle cx="8.200" cy="202.600" r="5.900" fill="#fff"/><path d="M8.200 199.800 l2.600 2.800 l-2.600 2.800 l-2.600 -2.800z" fill="none" stroke="#5fc0d0" stroke-width=".8"/><circle cx="8.200" cy="202.600" r=".9" fill="#5fc0d0"/></g>
<g transform="translate(240,0)"><g clip-path="url(#cp)"><rect x="0" y="0" width="240" height="212" fill="#363842"/><path d="M137.4 0.0 L240.0 0.0 L240.0 23.5 L196.2 11.8Z" fill="#1d1f29" /><path d="M196.2 11.8 L240.0 23.5 L240.0 64.8 L215.9 58.9 L176.6 23.5Z" fill="#2a2c36" /><path d="M0.0 58.9 L11.8 54.9 L240.0 182.5 L240.0 211.9 L172.7 211.9 L0.0 86.3Z" fill="#353741" /><path d="M0.0 109.9 L82.4 157.0 L102.0 211.9 L0.0 211.9Z" fill="#2a2c34" /><path d="M0.0 64.8 L215.9 211.9" fill="none" stroke="#c29a2c" stroke-width="0.6" opacity="0.95"/><path d="M0.0 66.3 L212.9 211.9" fill="none" stroke="#c29a2c" stroke-width="0.5" opacity="0.95"/><path d="M0.0 81.4 L172.7 211.9" fill="none" stroke="#c29a2c" stroke-width="0.55" opacity="0.95"/><path d="M7.8 54.9 L240.0 177.6" fill="none" stroke="#c29a2c" stroke-width="0.55" opacity="0.95"/><path d="M125.6 109.9 L240.0 168.8" fill="none" stroke="#c29a2c" stroke-width="0.55" opacity="0.95"/><path d="M117.7 54.9 L240.0 33.4" fill="none" stroke="#c29a2c" stroke-width="0.5" opacity="0.95"/><path d="M147.2 29.4 L240.0 50.0" fill="none" stroke="#c29a2c" stroke-width="0.5" opacity="0.95"/><path d="M147.2 40.2 L240.0 65.7" fill="none" stroke="#c29a2c" stroke-width="0.5" opacity="0.95"/><path d="M147.2 19.6 L240.0 34.3" fill="none" stroke="#c29a2c" stroke-width="0.45" opacity="0.95"/><path d="M0.0 94.2 L35.3 109.9" fill="none" stroke="#c29a2c" stroke-width="0.5" opacity="0.95"/><path d="M 36.3 141.3 Q 29.4 94.2 82.4 78.5 T 141.3 58.9" fill="none" stroke="#c29a2c" stroke-width="0.55" opacity="0.95"/><path d="M 64.8 109.9 Q 51.0 84.4 102.0 72.6 T 147.2 56.9" fill="none" stroke="#c29a2c" stroke-width="0.55" opacity="0.95"/><path d="M 0.0 58.9 Q 58.9 82.4 121.7 64.8 T 240.0 23.5" fill="none" stroke="#c29a2c" stroke-width="0.5" opacity="0.95"/><path d="M 31.4 54.9 Q 78.5 74.6 137.4 64.8" fill="none" stroke="#c29a2c" stroke-width="0.5" opacity="0.95"/><path d="M 174.6 41.2 Q 188.4 31.4 215.9 27.5 T 240.0 19.6" fill="none" stroke="#c29a2c" stroke-width="0.45" opacity="0.95"/><circle cx="140.3" cy="63.8" r="4.6" fill="none" stroke="#c29a2c" stroke-width=".5"/><circle cx="177.6" cy="42.2" r="3.4" fill="none" stroke="#c29a2c" stroke-width=".45"/><path d="M115.8 69.1 Q88.3 78.5 79.5 92.2 Q77.5 104.0 86.3 111.9 L96.2 106.9 Q89.3 98.1 92.2 90.3 Q98.1 80.5 124.0 71.6Z" fill="#46a94c" opacity=".92"/><path d="M119.7 70.3 Q92.2 79.5 85.4 92.2 Q83.4 102.0 91.2 109.5" fill="none" stroke="#6fd070" stroke-width=".5" opacity=".8"/><path d="M57.9 53.1 L60.6 52.0 L65.6 52.5 L67.4 53.9 L67.4 61.7 L57.9 60.7Z" fill="#8e8e92"/><path d="M67.0 54.6 L69.7 53.4 L74.7 54.0 L76.5 55.3 L76.5 62.4 L67.0 61.4Z" fill="#77777c"/><path d="M76.0 55.8 L78.8 54.6 L83.8 55.2 L85.6 56.6 L85.6 62.8 L76.0 61.8Z" fill="#8e8e92"/><path d="M85.1 54.5 L87.8 53.3 L92.8 53.9 L94.6 55.2 L94.6 63.2 L85.1 62.3Z" fill="#77777c"/><path d="M162.9 22.9 L165.7 21.7 L170.8 22.3 L172.7 23.7 L172.7 31.9 L162.9 30.9Z" fill="#8c8c90"/><path d="M172.2 25.2 L175.0 24.0 L180.1 24.6 L182.0 25.9 L182.0 32.5 L172.2 31.5Z" fill="#7a7a7f"/><path d="M182.5 56.4 L185.1 55.3 L189.8 55.8 L191.6 57.2 L191.6 67.7 L182.5 66.7Z" fill="#a0a0a3"/><path d="M191.1 60.4 L193.7 59.2 L198.5 59.8 L200.2 61.2 L200.2 70.3 L191.1 69.3Z" fill="#808085"/><path d="M199.8 58.3 L202.4 57.1 L207.1 57.7 L208.8 59.1 L208.8 70.6 L199.8 69.6Z" fill="#a0a0a3"/><path d="M125.6 86.0 L127.9 84.8 L132.0 85.4 L133.6 86.8 L133.6 100.2 L125.6 99.2Z" fill="#8a8a8e"/><path d="M133.2 87.9 L135.5 86.7 L139.6 87.3 L141.1 88.7 L141.1 103.1 L133.2 102.1Z" fill="#727277"/><path d="M140.8 89.0 L143.0 87.8 L147.2 88.4 L148.7 89.7 L148.7 101.1 L140.8 100.1Z" fill="#8a8a8e"/><path d="M148.4 89.8 L150.6 88.6 L154.8 89.2 L156.3 90.5 L156.3 103.3 L148.4 102.3Z" fill="#727277"/><path d="M155.9 91.3 L158.2 90.1 L162.4 90.7 L163.9 92.1 L163.9 103.8 L155.9 102.8Z" fill="#8a8a8e"/><path d="M163.5 91.6 L165.8 90.5 L170.0 91.1 L171.5 92.4 L171.5 104.8 L163.5 103.8Z" fill="#727277"/><path d="M166.8 98.0 L169.7 96.8 L175.1 97.4 L177.1 98.8 L177.1 115.9 L166.8 114.9Z" fill="#a0a0a3"/><path d="M176.6 102.7 L179.6 101.5 L184.9 102.1 L186.9 103.5 L186.9 119.9 L176.6 118.9Z" fill="#808085"/><path d="M186.4 104.4 L189.4 103.2 L194.8 103.8 L196.7 105.2 L196.7 117.5 L186.4 116.5Z" fill="#a0a0a3"/><path d="M203.1 114.6 L205.4 113.4 L209.6 114.0 L211.1 115.4 L211.1 133.2 L203.1 132.2Z" fill="#a0a0a3"/><path d="M210.7 116.4 L213.0 115.2 L217.2 115.8 L218.7 117.2 L218.7 131.5 L210.7 130.5Z" fill="#808085"/><path d="M218.3 117.4 L220.6 116.3 L224.8 116.9 L226.3 118.2 L226.3 132.3 L218.3 131.3Z" fill="#a0a0a3"/><path d="M225.9 116.4 L228.2 115.2 L232.4 115.8 L233.9 117.2 L233.9 136.8 L225.9 135.8Z" fill="#808085"/><path d="M8.8 115.5 L11.2 114.3 L15.5 114.9 L17.1 116.3 L17.1 132.9 L8.8 131.9Z" fill="#a0a0a3"/><path d="M16.7 115.6 L19.0 114.4 L23.4 115.0 L24.9 116.4 L24.9 133.6 L16.7 132.7Z" fill="#808085"/><path d="M24.5 115.0 L26.9 113.8 L31.2 114.4 L32.8 115.7 L32.8 138.5 L24.5 137.5Z" fill="#a0a0a3"/><path d="M100.1 91.2 L104.0 91.2 L104.0 104.0 L100.1 104.0Z" fill="#9a9a9d" /><path d="M144.8 107.9 L148.5 107.5 L148.5 120.7 L144.8 120.7Z" fill="#909094" /><path d="M0.0 147.2 L2.6 146.0 L7.5 146.6 L9.3 148.0 L9.3 177.5 L0.0 176.5Z" fill="#98989b"/><path d="M8.8 144.5 L11.5 143.3 L16.3 143.9 L18.1 145.3 L18.1 175.8 L8.8 174.8Z" fill="#7a7a7f"/><path d="M17.7 146.4 L20.3 145.2 L25.2 145.8 L26.9 147.2 L26.9 173.1 L17.7 172.1Z" fill="#98989b"/><path d="M24.5 177.6 L26.9 176.4 L31.2 177.0 L32.8 178.4 L32.8 200.2 L24.5 199.2Z" fill="#949497"/><path d="M32.4 174.7 L34.7 173.5 L39.1 174.1 L40.6 175.5 L40.6 205.1 L32.4 204.1Z" fill="#77777b"/><path d="M40.2 174.4 L42.6 173.3 L46.9 173.8 L48.5 175.2 L48.5 200.8 L40.2 199.8Z" fill="#949497"/><path d="M48.1 177.4 L50.4 176.3 L54.7 176.8 L56.3 178.2 L56.3 204.5 L48.1 203.5Z" fill="#77777b"/><path d="M55.9 177.7 L58.3 176.5 L62.6 177.1 L64.2 178.4 L64.2 205.3 L55.9 204.3Z" fill="#949497"/><path d="M85.9 175.4 L88.4 174.2 L93.0 174.8 L94.6 176.1 L94.6 191.8 L85.9 190.8Z" fill="#98989b"/><path d="M94.2 174.4 L96.7 173.2 L101.2 173.8 L102.8 175.1 L102.8 192.9 L94.2 191.9Z" fill="#7c7c80"/><path d="M15.7 176.6 L19.6 175.8 L20.4 193.3 L16.5 193.3Z" fill="#909094" /><path d="M147.2 26.5 L163.9 25.1 L163.9 30.4 L147.6 31.0Z" fill="#34c4d2" opacity="1"/><path d="M146.2 22.0 L162.9 20.6 L163.9 25.1 L147.2 26.5Z" fill="#4fdce4" opacity="1"/><path d="M160.9 23.2 L180.5 22.0 L180.5 26.5 L161.3 27.5Z" fill="#84d4c8" opacity="1"/><path d="M159.9 18.6 L179.6 17.7 L180.5 22.0 L160.9 23.2Z" fill="#a4e8dc" opacity="1"/><path d="M225.7 25.9 L240.0 27.5 L240.0 32.4 L226.1 31.0Z" fill="#34c4d2" opacity="1"/><path d="M224.7 21.6 L240.0 19.6 L240.0 27.5 L225.7 25.9Z" fill="#4fdce4" opacity="1"/><path d="M166.4 55.5 L175.0 59.9 L205.5 48.7 L205.5 56.9 L175.2 65.9 L166.8 61.2Z" fill="#8cd8c8" opacity="1"/><path d="M166.4 55.5 L198.2 44.2 L206.4 48.1 L175.0 59.9Z" fill="#acecdc" opacity="1"/><path d="M104.0 97.1 L131.1 110.9 L145.2 105.0 L144.8 115.8 L131.1 122.1 L104.4 106.9Z" fill="#98dccc" opacity="0.88"/><path d="M104.0 97.1 L117.7 92.2 L145.2 105.0 L131.1 110.9Z" fill="#b8f2e4" opacity="0.88"/><path d="M172.7 91.8 L196.2 97.1 L220.8 92.2 L220.2 98.1 L196.2 104.0 L182.5 104.0 L173.5 98.1Z" fill="#80d0d8" opacity="1"/><path d="M172.7 91.8 L177.6 84.8 L212.3 85.6 L220.8 92.2 L196.2 97.1Z" fill="#a0e6ea" opacity="1"/><path d="M198.2 107.5 L240.0 106.9 L240.0 117.7 L199.2 117.3Z" fill="#2cc0d2" opacity="1"/><path d="M196.2 97.5 L240.0 97.1 L240.0 106.9 L198.2 107.5Z" fill="#45d8e6" opacity="1"/><path d="M230.6 108.9 L240.0 117.7 L240.0 129.5 L231.6 125.6Z" fill="#80d0d8" opacity="1"/><path d="M230.6 108.9 L240.0 107.9 L240.0 117.7Z" fill="#a0e6ea" opacity="1"/><path d="M158.9 122.6 L196.2 141.3 L210.9 133.4 L208.4 145.6 L196.2 155.0 L159.9 135.4Z" fill="#64d0b4" opacity="1"/><path d="M158.9 122.6 L170.7 114.4 L188.8 117.7 L210.9 133.4 L196.2 141.3Z" fill="#84e8cc" opacity="1"/><path d="M206.0 150.7 L240.0 157.0 L240.0 173.7 L208.0 161.3Z" fill="#2cc0d2" opacity="1"/><path d="M206.0 150.7 L221.7 138.3 L240.0 145.6 L240.0 157.0Z" fill="#45d8e6" opacity="1"/><path d="M115.8 159.9 L149.1 194.3 L160.9 189.4 L159.3 204.1 L145.6 211.1 L115.8 196.2Z" fill="#90dcc8" opacity="1"/><path d="M115.8 159.9 L126.0 162.1 L160.9 189.4 L149.1 194.3Z" fill="#b0f2de" opacity="1"/><path d="M170.7 211.9 L177.6 206.0 L184.5 211.9Z" fill="#84e8cc" /><path d="M87.3 116.1 L112.9 132.7 Q115.5 133.8 117.9 133.3 L127.3 127.2 L127.3 124.5" fill="none" stroke="#fff" stroke-width=".9" stroke-linejoin="round"/><path d="M88.4 109.9 L92.3 106.6 L100.7 105.2 L109.6 105.8 L121.2 111.6 L126.2 116.6 L126.2 123.8 L122.9 127.2 L114.0 129.4 L107.3 126.1 L90.1 116.1Z" fill="#bdbdc1"/><path d="M90.1 116.1 L107.3 126.1 L114.0 129.4 L114.0 125.0 L106.0 120.5 L92.0 112.5Z" fill="#8e8e94"/><path d="M96.2 109.9 L102.9 107.2 L109.6 106.6 L118.4 111.1 L122.9 113.8 L116.2 119.4 L112.9 116.6 L105.1 112.7Z" fill="#23272e"/><path d="M100.7 107.2 L109.6 106.3 L119.6 111.9 L112.9 112.7Z" fill="#dcdce0"/><path d="M104.0 107.7 L109.6 107.2 L117.3 111.1 L112.9 111.9Z" fill="#2a3a4c"/><path d="M116.2 117.8 L124.0 114.4 L124.8 116.7 L117.9 120.6Z" fill="#1a2028"/><path d="M114.0 117.2 L116.2 120.0 L115.1 123.3 L113.7 122.8Z" fill="#e0403a"/><path d="M122.9 113.3 L125.7 116.6 L125.4 117.7 L123.2 114.9Z" fill="#c03a3a"/><ellipse cx="105.5" cy="124" rx="1.8" ry="2.2" fill="#55555a"/><ellipse cx="105.500" cy="124" rx=".9" ry="1.200" fill="#b8b8bc"/><path d="M120.7 58.9 L174.6 58.9 L174.6 86.3 L120.7 86.3Z" fill="#20222e" opacity=".94"/><rect x="122.1" y="66.7" width="50" height=".4" fill="#4a4c5a"/><rect x="122.1" y="76.5" width="50" height=".4" fill="#4a4c5a"/><text x="124.8" y="63.8" font-size="2.6" fill="#c8c8d0">X-VIEW</text><text x="124.8" y="72.2" font-size="2.6" fill="#a8a8b0">X   -419'2</text><text x="124.8" y="82.0" font-size="2.6" fill="#a8a8b0">Y   -n/a</text><path d="M182.5 55.3 L186.0 54.6 L186.4 58.9Z" fill="none" stroke="#f0903a" stroke-width="1"/><path d="M232.9 119.7 L240.0 119.7 L240.0 140.3 L232.9 140.3Z" fill="#ffffff" /><path d="M237.8 128.5 l-1.2 1.2 l1.2 1.2" stroke="#5fb8d8" stroke-width=".6" fill="none"/></g></g>
<g><rect x="0" y="0" width="146.8" height="54" fill="#24263a"/><rect x="0" y="0" width="48.7" height="10" fill="#6ab04c"/><rect x="48.7" y="0" width=".8" height="44" fill="#30324a"/><rect x="98.6" y="0" width=".8" height="44" fill="#30324a"/><rect x="0" y="44" width="146.8" height=".7" fill="#34364c"/><rect x="36" y="43.2" width="46" height=".9" fill="#3f8a6a"/><rect x="110" y="43.2" width="11" height=".9" fill="#3f8a6a"/><text x="24.3" y="6.6" font-size="3.4" fill="#dff0d4" text-anchor="middle">AUTONOMOUS</text><g fill="none" stroke-width=".7"><circle cx="6" cy="16" r="2.1" stroke="#b03a3a"/><circle cx="12.2" cy="16" r="2.1" stroke="#b09030"/><circle cx="18.3" cy="16" r="2.1" stroke="#3f8a4a"/></g><path d="M38 16.2 h5.6 M41.3 13.8 l2.6 2.4 l-2.6 2.400" stroke="#fff" stroke-width="1.400" fill="none"/><path d="M35 16.200 h-5 M32 14.200 l-2.200 2 l2.200 2" stroke="#565a6c" stroke-width="1" fill="none"/><path d="M58 21 A16 16 0 0 1 89.500 21" fill="none" stroke="#5a5d6e" stroke-width="2.300"/><path d="M107.500 21 A16 16 0 0 1 139 21" fill="none" stroke="#5a5d6e" stroke-width="2.300"/><rect x="97.300" y="17" width="1.400" height="16" fill="#3f8a6a"/><g font-size="3" fill="#8a8da2" text-anchor="middle"><text x="13" y="26.500">Strg. Angle</text><text x="31" y="26.500">Cmd.</text><text x="65" y="26.500">Accel.</text><text x="80" y="26.500">Cmd.</text><text x="115" y="26.500">Speed</text><text x="129.500" y="26.500">Cmd.</text><text x="24.500" y="40">Degree</text><text x="73" y="40">M/S²</text><text x="123" y="40">M/S</text></g><text x="73" y="49.800" font-size="3" fill="#9a9db0" text-anchor="middle">Intention: <tspan fill="#fff" font-weight="bold">N/A</tspan></text><rect x="24.300" y="29.500" width=".4" height="5" fill="#5a5d6e"/><rect x="73.500" y="29.500" width=".4" height="5" fill="#5a5d6e"/><rect x="122.500" y="29.500" width=".4" height="5" fill="#5a5d6e"/><text x="22.5" y="34.300" font-size="6.300" fill="#fff" text-anchor="end">-</text><text x="26.5" y="34.300" font-size="6.300" fill="#fff" text-anchor="start">-</text><text x="71.5" y="34.300" font-size="6.300" fill="#fff" text-anchor="end">-</text><text x="83" y="34.300" font-size="6.300" fill="#fff" text-anchor="middle">-0.12</text><text x="120.5" y="34.300" font-size="6.300" fill="#fff" text-anchor="end">-</text><text x="131.5" y="34.300" font-size="6.300" fill="#fff" text-anchor="middle">2.06</text><rect x="206.400" y="3.500" width="30" height="8.300" fill="#52627a"/><text x="221.400" y="9.200" font-size="3.300" fill="#d8e0ec" text-anchor="middle">Base</text><path d="M73.800 21 V4" stroke="#fff" stroke-width=".8"/><circle cx="73.800" cy="4.300" r="1.100" fill="#f0c030"/><path d="M109 20.800 h14" stroke="#d8d8dc" stroke-width="1.300"/><circle cx="107" cy="20.300" r="1" fill="#f0c030"/></g>
<g transform="translate(240,0)"><rect x="0" y="0" width="146.8" height="54" fill="#24263a"/><rect x="0" y="0" width="48.7" height="10" fill="#6ab04c"/><rect x="48.7" y="0" width=".8" height="44" fill="#30324a"/><rect x="98.6" y="0" width=".8" height="44" fill="#30324a"/><rect x="0" y="44" width="146.8" height=".7" fill="#34364c"/><rect x="36" y="43.2" width="46" height=".9" fill="#3f8a6a"/><rect x="110" y="43.2" width="11" height=".9" fill="#3f8a6a"/><text x="24.3" y="6.6" font-size="3.4" fill="#dff0d4" text-anchor="middle">AUTONOMOUS</text><g fill="none" stroke-width=".7"><circle cx="6" cy="16" r="2.1" stroke="#b03a3a"/><circle cx="12.2" cy="16" r="2.1" stroke="#b09030"/><circle cx="18.3" cy="16" r="2.1" stroke="#3f8a4a"/></g><path d="M38 16.2 h5.6 M41.3 13.8 l2.6 2.4 l-2.6 2.400" stroke="#fff" stroke-width="1.400" fill="none"/><path d="M35 16.200 h-5 M32 14.200 l-2.200 2 l2.200 2" stroke="#565a6c" stroke-width="1" fill="none"/><path d="M58 21 A16 16 0 0 1 89.500 21" fill="none" stroke="#5a5d6e" stroke-width="2.300"/><path d="M107.500 21 A16 16 0 0 1 139 21" fill="none" stroke="#5a5d6e" stroke-width="2.300"/><rect x="97.300" y="17" width="1.400" height="16" fill="#3f8a6a"/><g font-size="3" fill="#8a8da2" text-anchor="middle"><text x="13" y="26.500">Strg. Angle</text><text x="31" y="26.500">Cmd.</text><text x="65" y="26.500">Accel.</text><text x="80" y="26.500">Cmd.</text><text x="115" y="26.500">Speed</text><text x="129.500" y="26.500">Cmd.</text><text x="24.500" y="40">Degree</text><text x="73" y="40">M/S²</text><text x="123" y="40">M/S</text></g><text x="73" y="49.800" font-size="3" fill="#9a9db0" text-anchor="middle">Intention: <tspan fill="#fff" font-weight="bold">N/A</tspan></text><rect x="24.300" y="29.500" width=".4" height="5" fill="#5a5d6e"/><rect x="73.500" y="29.500" width=".4" height="5" fill="#5a5d6e"/><rect x="122.500" y="29.500" width=".4" height="5" fill="#5a5d6e"/><text x="22.5" y="34.300" font-size="6.300" fill="#fff" text-anchor="end">0.9</text><text x="26.5" y="34.300" font-size="6.300" fill="#fff" text-anchor="start">-4.0</text><text x="71.5" y="34.300" font-size="6.300" fill="#fff" text-anchor="end">-0.29</text><text x="83" y="34.300" font-size="6.300" fill="#fff" text-anchor="middle">-0.15</text><text x="120.5" y="34.300" font-size="6.300" fill="#fff" text-anchor="end">2.03</text><text x="131.5" y="34.300" font-size="6.300" fill="#fff" text-anchor="middle">1.95</text><rect x="206.400" y="3.500" width="30" height="8.300" fill="#52627a"/><text x="221.400" y="9.200" font-size="3.300" fill="#d8e0ec" text-anchor="middle">Diff</text><path d="M74.300 21 L73.300 4" stroke="#fff" stroke-width=".9"/><circle cx="73.300" cy="4.300" r="1.100" fill="#f0c030"/><path d="M109 20.300 l14 1" stroke="#fff" stroke-width="1.100"/><circle cx="107" cy="20.300" r="1" fill="#f0c030"/></g>
<rect x="0" y="211.500" width="480" height="48.500" fill="#15162a"/>
<g font-size="2.800" fill="#85889c" text-anchor="middle"><text x="30.0" y="218">00:01.5</text><rect x="30.0" y="219.500" width=".5" height=".8" fill="#85889c"/><text x="68.5" y="218">00:03.5</text><rect x="68.5" y="219.500" width=".5" height=".8" fill="#85889c"/><text x="106.9" y="218">00:05.5</text><rect x="106.9" y="219.500" width=".5" height=".8" fill="#85889c"/><text x="145.4" y="218">00:07.5</text><rect x="145.4" y="219.500" width=".5" height=".8" fill="#85889c"/><text x="183.8" y="218">00:09.5</text><rect x="183.8" y="219.500" width=".5" height=".8" fill="#85889c"/><text x="222.2" y="218">00:11.5</text><rect x="222.2" y="219.500" width=".5" height=".8" fill="#85889c"/><text x="260.7" y="218">00:13.5</text><rect x="260.7" y="219.500" width=".5" height=".8" fill="#85889c"/><text x="299.2" y="218">00:15.5</text><rect x="299.2" y="219.500" width=".5" height=".8" fill="#85889c"/><text x="337.6" y="218">00:17.5</text><rect x="337.6" y="219.500" width=".5" height=".8" fill="#85889c"/><text x="376.1" y="218">00:19.5</text><rect x="376.1" y="219.500" width=".5" height=".8" fill="#85889c"/><text x="414.5" y="218">00:21.5</text><rect x="414.5" y="219.500" width=".5" height=".8" fill="#85889c"/><text x="453.0" y="218">00:23.5</text><rect x="453.0" y="219.500" width=".5" height=".8" fill="#85889c"/></g>
<rect x="7" y="225.700" width="466" height=".9" fill="#58a848"/><rect x="0" y="233" width="480" height="14" fill="#3a3c4c"/><rect x="7" y="237.500" width="466" height=".9" fill="#c4c4cc"/><circle cx="257" cy="238" r="2.800" fill="#fff"/><rect x="7" y="243" width="466" height="2.200" rx="1.100" fill="#2a2c3a"/><circle cx="16" cy="244.100" r="1.100" fill="none" stroke="#bbb" stroke-width=".4"/><circle cx="471" cy="244.100" r="1.100" fill="none" stroke="#bbb" stroke-width=".4"/><circle cx="243" cy="244.100" r=".5" fill="#555"/><g font-size="2.900" fill="#85889c"><text x="10" y="253.500">Play/forward</text><text x="99.500" y="253.500">Normal Speed</text><text x="141.500" y="253.500">No Lookahead</text></g><path d="M52.300 250.300 l3.300 2.100 l-3.300 2.100z" fill="#fff"/><path d="M45 252 l1 1 l1 -1z" fill="#85889c"/><rect x="62" y="249.300" width="27.500" height="6.200" fill="#22243a"/><text x="75.700" y="253.600" font-size="2.800" fill="#85889c" text-anchor="middle">1535046675.80</text><path d="M457 254.500 l1 -2 l1 2z" fill="#85889c"/><rect x="468" y="252" width="2.600" height="2.400" fill="none" stroke="#85889c" stroke-width=".4"/>
</svg>
<!-- AVS window -->
<style>
#avs .ln{position:absolute;white-space:pre;font-size:15px;line-height:17px;height:17px;color:#3b3b3b}
#avs .lk{color:#1262d6;text-decoration:underline;text-decoration-thickness:1px;text-underline-offset:1.400px}
#avs .sq{padding-bottom:2px;background-image:linear-gradient(45deg,transparent 36%,#f0302c 36%,#f0302c 64%,transparent 64%),linear-gradient(-45deg,transparent 36%,#f0302c 36%,#f0302c 64%,transparent 64%);background-size:4px 2.600px;background-position:0 100%,2px 100%;background-repeat:repeat-x}
#avs .hl{background:#7be01a}
#avs .mono{font-family:"Liberation Mono",monospace;font-size:14.5px}
#avs .tl{position:absolute;top:11px;font-size:15.5px;color:#3c3c3c;white-space:nowrap}
</style>
<div id="avs" class="win" style="left:1382px;top:28px;width:538px;height:1052px;background:#f2f1f0;border-radius:7px 7px 0 0;box-shadow:0 3px 16px rgba(0,0,0,.5)">
 <div class="tb" style="height:28.5px;background:linear-gradient(#403f3b,#3b3a36);color:#888681;font-size:15.200px;line-height:28px"><span style="letter-spacing:-0.236px">AVS</span></div>
 <div class="abs" style="left:476px;top:6px;width:16px;height:16px;border-radius:50%;background:#5f5e58"></div>
 <div class="abs" style="left:496px;top:6px;width:16px;height:16px;border-radius:50%;background:#5f5e58"></div>
 <div class="abs" style="left:516px;top:6px;width:16px;height:16px;border-radius:50%;background:#5f5e58"></div>
 <svg class="abs" style="left:476px;top:6px" width="60" height="16"><path d="M4.5 8.5 h7" stroke="#45433f" stroke-width="1.4"/><rect x="24.500" y="4.500" width="7" height="7" fill="none" stroke="#45433f" stroke-width="1.200"/><path d="M44.800 4.800 l6.400 6.400 M51.200 4.800 l-6.400 6.400" stroke="#45433f" stroke-width="1.200"/></svg>
 <!-- toolbar -->
 <div class="abs" id="avstb" style="left:0;top:28px;width:538px;height:41px">
  <svg class="abs" style="left:0;top:0" width="538" height="41" viewBox="1382 56 538 41">
   <defs><radialGradient id="lens" cx=".4" cy=".35" r=".7"><stop offset="0" stop-color="#fff"/><stop offset="1" stop-color="#dfe3ee"/></radialGradient></defs>
   <!-- search -->
   <path d="M1403.500 79 L1409.500 85.500" stroke="#2a2a2a" stroke-width="3.600" stroke-linecap="round"/>
   <circle cx="1398.500" cy="73" r="7" fill="url(#lens)" stroke="#2d3c9a" stroke-width="2.600"/>
   <!-- link -->
   <path d="M1478 66 q8 -1 9 8 v4 h4.500 l-6.500 7.500 l-6.500 -7.500 h4 v-3 q0 -5 -4.500 -6z" fill="#d6d5d3" stroke="#c4c3c1" stroke-width=".8"/>
   <!-- text icon -->
   <rect x="1541.500" y="65.500" width="21" height="20" rx="2" fill="#f7f7f6" stroke="#8c8b88"/>
   <!-- gears -->
   <g fill="none" stroke="#aaa9a6" stroke-width="2.200"><circle cx="1613" cy="70" r="3.600"/><circle cx="1624.500" cy="78.500" r="4.600"/><circle cx="1611.500" cy="82.500" r="2.300"/></g>
   <g stroke="#aaa9a6" stroke-width="1.600"><path d="M1613 64 v12 M1607 70 h12 M1608.800 65.800 l8.400 8.400 M1617.200 65.800 l-8.400 8.400"/><path d="M1624.500 71 v15 M1617 78.500 h15 M1619.200 73.200 l10.600 10.600 M1629.800 73.200 l-10.600 10.600"/><path d="M1608 79 l7 7 M1615 79 l-7 7"/></g>
   <circle cx="1613" cy="70" r="2" fill="#f2f1f0"/><circle cx="1624.500" cy="78.500" r="2.600" fill="#f2f1f0"/>
   <path d="M1643.500 66 V86" stroke="#d6d5d2"/>
   <!-- no entry -->
   <circle cx="1667.500" cy="76" r="9" fill="#fff" stroke="#cc1a1a" stroke-width="3.600"/><path d="M1661 69.500 L1674 82.500" stroke="#cc1a1a" stroke-width="3.600"/>
   <path d="M1691.500 66 V86" stroke="#d6d5d2"/>
   <!-- notebook -->
   <rect x="1707.500" y="68.500" width="15" height="17" rx="1" fill="#f4f4f2" stroke="#9a9996"/><rect x="1707.500" y="66" width="15" height="4" fill="#6aa82a"/><path d="M1710 74 h10 M1710 77 h10 M1710 80 h7" stroke="#c4c3c0" stroke-width="1"/>
  </svg>
  <div class="abs" style="left:163px;top:10px;font-size:9px;color:#222;line-height:9px">a</div><div class="abs" style="left:173px;top:9px;font-size:9px;color:#222;line-height:9px;font-style:italic">c</div><div class="abs" style="left:165.500px;top:15px;font-size:13.500px;color:#111;line-height:13px;font-weight:bold;font-family:'Liberation Sans',sans-serif">b</div>
  <div class="tl" style="left:34px;letter-spacing:-0.688px">Search</div>
  <div class="tl" style="left:118px;color:#b4b3b0;letter-spacing:-0.234px">Link</div>
  <div class="tl" style="left:185.500px;letter-spacing:-0.109px">Text</div>
  <div class="tl" style="left:347px;letter-spacing:0.268px">Notebook</div>
 </div>
 <!-- text area -->
 <div class="abs" style="left:1px;top:69px;width:524px;height:948px;background:#fff;overflow:hidden">
<!--TEXT-START-->
<div class="ln" style="left:7.5px;top:4.8px;letter-spacing:-0.108px">Digging deeper:</div>
<div class="ln" style="left:7.5px;top:21.8px;letter-spacing:0.621px"><span class="lk">https://avs.auto/#/</span></div>
<div class="ln" style="left:32.2px;top:38.8px;letter-spacing:0.495px"><span class="lk">https://avs.auto/demo/index.html</span></div>
<div class="ln" style="left:264.0px;top:38.8px;letter-spacing:-0.072px"> (live demo)</div>
<div class="ln" style="left:7.5px;top:76.8px;letter-spacing:-0.689px">Uses:</div>
<div class="ln" style="left:32.2px;top:94.3px;letter-spacing:0.108px"><span class="sq">streetscape</span>.<span class="sq">gl</span> </div>
<div class="ln" style="left:131.4px;top:94.3px;letter-spacing:0.464px"><span class="lk">https://avs.auto/#/streetscape.gl/overview/introduction</span></div>
<div class="ln" style="left:63.2px;top:114.9px;letter-spacing:0.126px"><span class="sq">streetscape</span>.<span class="sq">gl</span> provides components to render XVIZ protocol</div>
<div class="ln" style="left:63.2px;top:132.3px;letter-spacing:0.522px"><span class="lk">https://avs.auto/#/xviz/overview/introduction</span></div>
<div class="ln" style="left:376.0px;top:132.3px;letter-spacing:-0.224px"> in web using React/</div>
<div class="ln" style="left:63.2px;top:149.8px;letter-spacing:-0.444px"><span class="sq">WebGL</span>.</div>
<div class="ln" style="left:7.5px;top:188.3px;letter-spacing:-0.007px">Questionable claims:</div>
<div class="ln" style="left:7.5px;top:205.3px;letter-spacing:-0.032px">- "With AVS abstracting <span class="sq">visualization</span>, developers can focus on core</div>
<div class="ln" style="left:7.5px;top:222.3px;letter-spacing:0.075px">autonomy capabilities for drive systems, remote assistance, </div>
<div class="ln" style="left:412.2px;top:222.3px;letter-spacing:0.217px"><span class="hl">mapp</span></div>
<div class="ln" style="left:450.6px;top:222.3px;letter-spacing:-0.211px">ing, and</div>
<div class="ln" style="left:7.5px;top:239.3px;letter-spacing:-0.029px">simulation." -- </div>
<div class="ln" style="left:102.4px;top:239.3px;letter-spacing:0.606px"><span class="lk">https://avs.auto/#/about</span></div>
<div class="ln" style="left:272.9px;top:239.3px;letter-spacing:-0.037px"> . However visualisation will need to</div>
<div class="ln" style="left:7.5px;top:256.3px;letter-spacing:-0.023px">cater to the nuances of the system being developed. I'm sceptical as to</div>
<div class="ln" style="left:7.5px;top:273.3px;letter-spacing:0.025px">whether a general visualisation approach would work here. A general tool</div>
<div class="ln" style="left:7.5px;top:290.3px;letter-spacing:0.069px">would need to provide the developer of the hardware to describe it in a</div>
<div class="ln" style="left:7.5px;top:307.3px;letter-spacing:-0.099px">highly flexible yet machine readable way (e.g. via <span class="sq">SemWeb</span> standards).</div>
<div class="ln" style="left:7.5px;top:324.3px;letter-spacing:0.081px">Anything less than that would seem to be either limited (in terms of</div>
<div class="ln" style="left:7.5px;top:341.3px;letter-spacing:0.110px">flexibility to cater to the nuances of novel hardware components) or</div>
<div class="ln" style="left:7.5px;top:358.3px;letter-spacing:-0.044px">wasteful (e.g. humans having to describe specifications for the device as</div>
<div class="ln" style="left:7.5px;top:375.3px;letter-spacing:-0.232px">well as custom <span class="sq">vis</span> UI).</div>
<div class="ln" style="left:7.5px;top:391.8px;letter-spacing:-0.002px">- claims to provide "declarative" visualisation language, however code at</div>
<div class="ln" style="left:7.5px;top:408.8px;letter-spacing:0.445px"><span class="lk">https://avs.auto/#/xviz/getting-started/converting-to-xviz/</span></div>
<div class="ln" style="left:403.9px;top:408.8px;letter-spacing:0.342px"><span class="lk"><span class="hl">mapp</span></span></div>
<div class="ln" style="left:442.8px;top:408.8px;letter-spacing:0.033px"><span class="lk">ing-data-</span></div>
<div class="ln" style="left:7.5px;top:425.8px;letter-spacing:0.069px"><span class="lk">to-xviz/lidar?section=lidar-scans</span></div>
<div class="ln" style="left:222.8px;top:425.8px;letter-spacing:0.032px"> looks imperative to me. e.g. </div>
<div class="ln" style="left:415.5px;top:425.8px;letter-spacing:0.188px"><span class="mono">colors[i *</span></div>
<div class="ln" style="left:7.5px;top:443.8px;letter-spacing:0.234px"><span class="mono">4 + 1] = 80 + reflectance * 80;</span></div>
<div class="ln" style="left:7.5px;top:461.8px;letter-spacing:0.021px">- "declarative UI" -- seems to re-implement things that would be better</div>
<div class="ln" style="left:7.5px;top:478.8px;letter-spacing:-0.021px">achieved with HTML / <span class="sq">flexbox</span> (which is already declarative)</div>
<div class="ln" style="left:7.5px;top:495.8px;letter-spacing:-0.053px">- claims to be releasing as <span class="sq">opensource</span> to engage with community, but <span class="sq">xvis</span></div>
<div class="ln" style="left:7.5px;top:512.8px;letter-spacing:-0.064px">only has 4 contributors have &gt;8 commits. </div>
<div class="ln" style="left:282.1px;top:512.8px;letter-spacing:0.522px"><span class="lk">https://github.com/uber/xviz/</span></div>
<div class="ln" style="left:7.5px;top:529.8px;letter-spacing:0.394px"><span class="lk">graphs/contributors</span></div>
<div class="ln" style="left:143.4px;top:529.8px;letter-spacing:0.251px"> (most/all of whom work for <span class="sq">uber</span>)</div>
<div class="ln" style="left:7.5px;top:546.8px;letter-spacing:-0.098px">- use of <span class="sq">javascript</span> - the more complex demo (<span class="sq">nuTonomy</span>-0006 seems to</div>
<div class="ln" style="left:7.5px;top:563.8px;letter-spacing:-0.049px">flicker on my computer. Not sure <span class="sq">js</span> was a good choice!)</div>
<div class="ln" style="left:7.5px;top:580.8px;letter-spacing:0.018px">"forward compatible". Binary encoding depends on <span class="sq">glTF</span>, so at a minimum,</div>
<div class="ln" style="left:7.5px;top:597.8px;letter-spacing:0.052px">depends on <span class="sq">glTF</span> remaining forward compatible.</div>
<div class="ln" style="left:7.5px;top:632.3px;letter-spacing:0.003px">Possible ties to things I've worked on:</div>
<div class="ln" style="left:32.3px;top:649.6px;letter-spacing:-0.008px">"coordinate systems" -- </div>
<div class="ln" style="left:190.3px;top:649.6px;letter-spacing:0.602px"><span class="lk">https://avs.auto/#/about</span></div>
<div class="ln" style="left:360.7px;top:649.6px;letter-spacing:0.102px"> (does it provide UI for</div>
<div class="ln" style="left:38.0px;top:666.6px;letter-spacing:-0.282px">coordinate systems like GPS2XYT?)</div>
<div class="ln" style="left:32.3px;top:687.6px;letter-spacing:-0.046px">Wonder if XVIS could be used for domains such as sport player tracking,</div>
<div class="ln" style="left:38.0px;top:704.6px;letter-spacing:-0.009px"><span class="sq">robocup</span>, and animal tracking?</div>
<div class="ln" style="left:7.5px;top:742.3px;letter-spacing:-0.065px">Still unclear:</div>
<div class="ln" style="left:32.3px;top:759.6px;letter-spacing:-0.061px">What if streams are at different rates (e.g 3/5 Hz and 1 Hz, such that</div>
<div class="ln" style="left:38.0px;top:776.6px;letter-spacing:-0.283px">they only align every 3 seconds?)</div>
<div class="ln" style="left:32.3px;top:797.6px;letter-spacing:0.151px">use of binary "<span class="sq">glb</span>" format. </div>
<div class="ln" style="left:212.3px;top:797.6px;letter-spacing:0.436px"><span class="lk">https://avs.auto/#/xviz/user-guide/</span></div>
<div class="ln" style="left:38.0px;top:814.6px;letter-spacing:0.174px"><span class="lk">structure-of-xviz-data</span></div>
<div class="ln" style="left:182.7px;top:814.6px;letter-spacing:-0.282px"> mentions GLB (and can also be seen in the</div>
<div class="ln" style="left:38.0px;top:831.6px;letter-spacing:0.081px">message inspector for the demo), but it's not clear how/why it's used.</div>
<div class="ln" style="left:38.0px;top:848.6px;letter-spacing:0.368px"><span class="lk">https://avs.auto/#/xviz/overview/concepts?section=primitive</span></div>
<div class="ln" style="left:38.0px;top:865.6px;letter-spacing:0.001px">mentions "The XVIZ protocol specification does not prescribe any given</div>
<div class="ln" style="left:38.0px;top:882.6px;letter-spacing:0.034px">encoding, however the XVIZ libraries come with support for encoding</div>
<div class="ln" style="left:38.0px;top:899.6px;letter-spacing:-0.293px">and parsing in JSON." (and GLB it seems). </div>
<div class="ln" style="left:315.3px;top:899.6px;letter-spacing:0.596px"><span class="lk">https://avs.auto/#/xviz/</span></div>
<div class="ln" style="left:38.0px;top:916.6px;letter-spacing:0.292px"><span class="lk">protocol/schema/session-protocol?section=start</span></div>
<div class="ln" style="left:368.7px;top:916.6px;letter-spacing:0.035px"> "message_format -</div>
<div class="ln" style="left:38.0px;top:933.6px;letter-spacing:-0.392px">valid values: JSON - JSON types encoded as UT8 strings. BINARY - Our</div>
<div class="abs" style="left:24.3px;top:45.6px;width:4.4px;height:4.4px;border-radius:50%;background:#3a3a3a"></div>
<div class="abs" style="left:24.3px;top:101.1px;width:4.4px;height:4.4px;border-radius:50%;background:#3a3a3a"></div>
<div class="abs" style="left:24.3px;top:656.4px;width:4.4px;height:4.4px;border-radius:50%;background:#3a3a3a"></div>
<div class="abs" style="left:24.3px;top:694.4px;width:4.4px;height:4.4px;border-radius:50%;background:#3a3a3a"></div>
<div class="abs" style="left:24.3px;top:766.4px;width:4.4px;height:4.4px;border-radius:50%;background:#3a3a3a"></div>
<div class="abs" style="left:24.3px;top:804.4px;width:4.4px;height:4.4px;border-radius:50%;background:#3a3a3a"></div>
<div class="abs" style="left:50.9px;top:121.6px;width:5.4px;height:5.4px;border-radius:50%;border:1.3px solid #3a3a3a"></div>
<!--TEXT-END-->
 </div>
 <!-- scrollbar -->
 <div class="abs" style="left:525px;top:69px;width:13px;height:948px;background:#f7f7f6;border:1px solid #b4b2af;border-radius:6.5px"></div>
 <div class="abs" style="left:525px;top:82.5px;width:13px;height:920.5px;background:linear-gradient(90deg,#d9d8d6,#e3e2e0);border:1px solid #aaa8a5;border-radius:6.5px"></div>
 <svg class="abs" style="left:528.5px;top:74.5px" width="7" height="4"><path d="M0 4 L3.5 0 L7 4Z" fill="#4a4946"/></svg>
 <div class="abs" style="left:525px;top:434px;width:13px;height:330px;border-radius:6.5px;background:linear-gradient(90deg,#fdfdfd,#f1f0ef);border:1px solid #aaa8a5"></div>
 <div class="abs" style="left:528.5px;top:596px;width:6px;height:8px;background:repeating-linear-gradient(#a4a3a0 0 1px,transparent 1px 3px)"></div>
 <svg class="abs" style="left:528.5px;top:1008px" width="7" height="4"><path d="M0 0 L3.5 4 L7 0Z" fill="#4a4946"/></svg>
 <!-- find bar -->
 <svg class="abs" style="left:14px;top:1029.500px" width="12" height="12"><path d="M1.500 1.500 L10.500 10.500 M10.500 1.500 L1.500 10.500" stroke="#4a4a48" stroke-width="3.200"/></svg>
 <div class="abs" style="left:38px;top:1027px;font-size:15.500px;color:#3c3c3c;white-space:nowrap;letter-spacing:-0.294px">Find:</div>
 <div class="abs" style="left:72.500px;top:1023px;width:347px;height:25px;border:1px solid #b6b5b2;border-radius:4px;background:#fff"></div>
 <div class="abs" style="left:76px;top:1027px;font-size:15.500px;color:#2c2c2c;white-space:nowrap;letter-spacing:0.055px">mapp</div>
 <div class="abs" style="left:427px;top:1027px;font-size:15.500px;color:#3c3c3c;white-space:nowrap;letter-spacing:-0.414px">Previous</div>
 <div class="abs" style="left:497px;top:1027px;font-size:15.500px;color:#3c3c3c;white-space:nowrap;letter-spacing:0.031px">Next</div>
</div>
<div id="topbar">
<span style="left:12.5px;letter-spacing:0.261px">Activities</span>
<svg class="abs" style="left:100px;top:4px" width="19" height="19" viewBox="0 0 19 19"><circle cx="9.5" cy="10" r="8" fill="#f4a21c"/><circle cx="9.5" cy="10" r="8" fill="url(#ffg)"/><defs><radialGradient id="ffg" cx="0.7" cy="0.2" r="0.9"><stop offset="0" stop-color="#ffdd3a"/><stop offset="0.5" stop-color="#ff8a1a"/><stop offset="1" stop-color="#e8203f"/></radialGradient></defs><circle cx="10.5" cy="8.5" r="4.3" fill="#2f3ec4"/><path d="M5 9 Q8 7 10 9 Q12 11 9 12 Q6 12 5 9Z" fill="#ff7a1a"/></svg>
<span style="left:122.5px;letter-spacing:0.137px">Firefox Web Browser</span>
<svg class="abs" style="left:275px;top:10px" width="12" height="7"><path d="M0.5 0.5 L10.5 0.5 L5.5 6Z" fill="#d8d5cf"/></svg>
<span style="left:959.5px;letter-spacing:-0.161px">Sun 23:00</span>
<!-- thermometer -->
<svg class="abs" style="left:1645px;top:4px" width="14" height="18" viewBox="0 0 14 18"><path d="M4.2 2.2 a1.8 1.8 0 0 1 3.6 0 V10.2 a3.3 3.3 0 1 1 -3.6 0Z" fill="none" stroke="#e6e3dd" stroke-width="1.7"/><path d="M8 4.2h3M8 7h2.4" stroke="#e6e3dd" stroke-width="1.5"/></svg>
<span style="left:1663.7px;letter-spacing:-0.240px">16%</span>
<!-- notes icon -->
<svg class="abs" style="left:1718px;top:2px" width="20" height="20" viewBox="0 0 20 20"><path d="M1.5 5.5 h11.5 l-3.5 5 l4.5 -2.2 l2.5 -3 v10.2 h-15z" fill="#e6e3dd"/><path d="M1.5 17.2h15" stroke="#e6e3dd" stroke-width="1.8"/><path d="M9.5 11.5 L17.5 1.5" stroke="#e6e3dd" stroke-width="1.6"/></svg>
<!-- dropbox -->
<svg class="abs" style="left:1763px;top:4px" width="20" height="19" viewBox="0 0 20 19"><path d="M5 1 L10 4.6 L15 1 L19 4.2 L15.5 7.2 L19 10.2 L15 13.2 L10 17.8 L5 13.2 L1 10.2 L4.5 7.2 L1 4.2Z" fill="#e6e3dd"/></svg>
<!-- wifi -->
<svg class="abs" style="left:1812px;top:5px" width="18" height="16" viewBox="0 0 18 16"><path d="M1.5 6.2 A10.5 10.5 0 0 1 16.5 6.2" fill="none" stroke="#8d8a84" stroke-width="1.8"/><path d="M4.2 9 A6.8 6.8 0 0 1 13.8 9" fill="none" stroke="#dcd9d3" stroke-width="1.8"/><path d="M6.6 11.6 A3.4 3.4 0 0 1 11.4 11.6" fill="none" stroke="#e6e3dd" stroke-width="1.8"/><circle cx="9" cy="14" r="1.6" fill="#e6e3dd"/></svg>
<!-- volume -->
<svg class="abs" style="left:1840px;top:5px" width="18" height="16" viewBox="0 0 18 16"><path d="M0.5 5.5 h3 l4.5 -4.5 v14 l-4.5 -4.5 h-3z" fill="#e6e3dd"/><path d="M9.8 4.6 A4.6 4.6 0 0 1 9.8 11.4" fill="none" stroke="#dcd9d3" stroke-width="1.6"/><path d="M12 2.6 A7.4 7.4 0 0 1 12 13.4" fill="none" stroke="#a6a39d" stroke-width="1.6"/><path d="M14.4 0.8 A10 10 0 0 1 14.4 15.2" fill="none" stroke="#77746f" stroke-width="1.5"/></svg>
<!-- battery -->
<svg class="abs" style="left:1870px;top:4px" width="14" height="18" viewBox="0 0 14 18"><path d="M1.8 3.2 h10.4 v13 h-10.4z M4.8 1.2 h4.4" fill="none" stroke="#7d7a75" stroke-width="1.8"/><path d="M8.3 5.5 L4.6 10.3 h2.6 L5.8 14 L9.6 9 h-2.6z" fill="#a6a39d"/></svg>
<svg class="abs" style="left:1894px;top:11px" width="12" height="7"><path d="M0.5 0.5 L10.5 0.5 L5.5 5.8Z" fill="#d8d5cf"/></svg>
</div>
<div id="dock" style="background:linear-gradient(#4f323d,#46303a 50%,#3d2a32)">
<svg class="abs" style="left:0;top:0" width="67" height="1053" viewBox="0 27 67 1053">
<defs>
<linearGradient id="ffbody" x1=".85" y1=".1" x2=".15" y2=".9"><stop offset="0" stop-color="#ffd03a"/><stop offset=".35" stop-color="#ff9a1a"/><stop offset=".65" stop-color="#ff4a2a"/><stop offset="1" stop-color="#e0207a"/></linearGradient>
<linearGradient id="ffflame" x1=".3" y1="0" x2=".7" y2="1"><stop offset="0" stop-color="#fff04a"/><stop offset=".5" stop-color="#ffd02a"/><stop offset="1" stop-color="#ff9a1a"/></linearGradient>
<linearGradient id="ffhead" x1="0" y1="0" x2="1" y2=".6"><stop offset="0" stop-color="#ff3a3a"/><stop offset="1" stop-color="#ff9a1e"/></linearGradient>
<linearGradient id="tbwing" x1=".2" y1="0" x2=".8" y2="1"><stop offset="0" stop-color="#2a8ae0"/><stop offset=".5" stop-color="#2468c8"/><stop offset="1" stop-color="#1a3a9a"/></linearGradient>
<radialGradient id="ffb" cx="0.65" cy="0.25" r="0.95"><stop offset="0" stop-color="#ffe14a"/><stop offset="0.35" stop-color="#ffa51f"/><stop offset="0.7" stop-color="#ff4a2a"/><stop offset="1" stop-color="#d81e6a"/></radialGradient>
<linearGradient id="ffglobe" x1=".5" y1="0" x2=".5" y2="1"><stop offset="0" stop-color="#1a7af8"/><stop offset=".55" stop-color="#2a4ad8"/><stop offset="1" stop-color="#3a1a8a"/></linearGradient>
<radialGradient id="tbg" cx="0.4" cy="0.3" r="0.8"><stop offset="0" stop-color="#2a7ad8"/><stop offset="1" stop-color="#1a3a98"/></radialGradient>
<radialGradient id="helpg" cx="0.5" cy="0.25" r="0.8"><stop offset="0" stop-color="#5b9bd0"/><stop offset="1" stop-color="#2a62a0"/></radialGradient>
<radialGradient id="globe2" cx="0.35" cy="0.3" r="0.8"><stop offset="0" stop-color="#c7dbf7"/><stop offset="0.6" stop-color="#6f9fe0"/><stop offset="1" stop-color="#3e72c4"/></radialGradient>
<linearGradient id="swg" x1="0" y1="0" x2="0" y2="1"><stop offset="0" stop-color="#f58a3a"/><stop offset="1" stop-color="#e8601c"/></linearGradient>
<linearGradient id="cab" x1="0" y1="0" x2="0" y2="1"><stop offset="0" stop-color="#c9c9c9"/><stop offset="1" stop-color="#8c8c8c"/></linearGradient>
</defs>
<!-- firefox highlight -->
<rect x="2" y="28" width="62" height="62" rx="5" fill="#6d5559"/>
<circle cx="5" cy="59.5" r="2.6" fill="#e95420"/>
<!-- firefox -->
<circle cx="33" cy="60.500" r="21.700" fill="url(#ffbody)"/>
<circle cx="31.800" cy="54.500" r="13.800" fill="url(#ffglobe)"/>
<path d="M40.300 36 Q37.500 41 40.500 46.500 Q45.500 53 44.500 60 Q43 67 36 70.500 Q46 72 51.500 66 Q56.500 58 53.500 49 Q50 41 44 39.500 Q41.500 38.500 40.300 36Z" fill="url(#ffflame)"/>
<path d="M15 46 L18 41.200 L21 44.500 Q25 42.500 29.500 43.800 Q27.500 46 28.500 48.500 L32.700 50.500 Q30.500 53 27 53.500 Q24.500 55 25.500 58 Q20 60 17 56 Q14 52 15 46Z" fill="url(#ffhead)"/>
<path d="M24.700 58.300 Q28 62.500 36.500 62 Q34 66.500 29.500 66.700 Q25.500 64 24.700 58.300Z" fill="#ff9a1e"/>
<!-- thunderbird -->
<circle cx="33.100" cy="122.700" r="23.200" fill="url(#tbg)"/>
<path d="M12 133 Q14 143 24 145.500 L36 142 L13 132Z" fill="#1b2a6e"/>
<path d="M15 112.500 L42.500 117 L43 141 L12.500 132 L12 123Z" fill="#f8f8fb"/>
<path d="M18 117 L24.700 128 L42.500 122.500" fill="none" stroke="#8a8a96" stroke-width=".7"/>
<path d="M18 119 Q17 106 28 100.500 Q33 98.500 39.500 102 Q50 105 55 116 Q57.500 126 52.500 136 Q46 145 36 146.200 Q44 140 43.500 130 Q44 118 36 112.500 Q28 108 22.500 114 Q19.500 117 18 119Z" fill="url(#tbwing)"/>
<path d="M18 119 Q19.500 114 24 112 L20.500 117.500Z" fill="#8ad0f8"/>
<circle cx="22.300" cy="113" r="1" fill="#1a1a2a"/>
<!-- files -->
<circle cx="5" cy="187" r="2.6" fill="#e95420"/>
<rect x="12" y="165" width="42" height="43" rx="2" fill="url(#cab)"/>
<rect x="15" y="168" width="36" height="12" fill="#3c3c3c"/>
<rect x="16" y="172" width="34" height="8" fill="#f08a2a"/><rect x="17" y="174" width="32" height="3" fill="#fbe6c8"/>
<rect x="14" y="181" width="38" height="25" rx="1" fill="#b4b4b4" stroke="#8a8a8a" stroke-width="1"/>
<rect x="26" y="190" width="14" height="8" rx="1" fill="#e8e8e8" stroke="#7a7a7a" stroke-width="1"/>
<!-- writer -->
<path d="M14 227 h28 l11 11 v36 a1 1 0 0 1 -1 1 h-37 a1 1 0 0 1 -1 -1z" fill="#fff" stroke="#12507e" stroke-width="2.5"/>
<path d="M42 227 h11 v11z" fill="#1478b8"/>
<rect x="21" y="245" width="9" height="2.2" fill="#12507e"/><rect x="21" y="249.5" width="9" height="2.2" fill="#12507e"/><rect x="21" y="254" width="9" height="2.2" fill="#12507e"/>
<rect x="21" y="258.5" width="24" height="2.2" fill="#12507e"/><rect x="21" y="263" width="24" height="2.2" fill="#12507e"/><rect x="21" y="267.5" width="18" height="2.2" fill="#12507e"/>
<rect x="32" y="245" width="13" height="11" fill="#5aa6d8"/><path d="M32 256 l4 -6 l3 3 l3 -4 l3 7z" fill="#2e4a3a"/><circle cx="42" cy="248" r="1.4" fill="#f4d23a"/>
<!-- software -->
<path d="M12 302 h42 v33 a1 1 0 0 1 -1 1 h-40 a1 1 0 0 1 -1 -1z" fill="url(#swg)"/>
<path d="M12 302 l3 -3 h36 l3 3z" fill="#d8581a"/>
<path d="M28.500 303 v-6.500 a4.500 3.500 0 0 1 9 0 v6.500" fill="none" stroke="#e8601c" stroke-width="2"/>
<path d="M33 311 l9 18.500 h-4.300 l-1.700 -3.800 h-6 l-1.700 3.800 h-4.300z M33 317 l-2 5 h4z" fill="#fff" fill-rule="evenodd"/>
<rect x="23" y="320" width="20" height="3.6" rx="1.8" fill="#fff"/><rect x="25.5" y="321.2" width="9" height="1.3" fill="#e8601c"/>
<!-- help -->
<circle cx="33" cy="380" r="19.7" fill="url(#helpg)"/>
<path d="M27 373 a6.5 6.5 0 1 1 9.5 5.6 q-3 1.8 -3 5.4" fill="none" stroke="#fff" stroke-width="3.4" stroke-linecap="round"/><circle cx="33.4" cy="391" r="2.3" fill="#fff"/>
<!-- slack -->
<circle cx="33" cy="443" r="20.7" fill="#fff"/>
<g stroke-width="4.6" stroke-linecap="round">
<path d="M22 439.5 h8.5" stroke="#36c5f0"/><path d="M30.5 431.5 v2" stroke="#36c5f0"/>
<path d="M36.500 432 v8.500" stroke="#2eb67d"/><path d="M43.500 439.500 h1" stroke="#2eb67d"/>
<path d="M36.500 447 h8" stroke="#ecb22e"/><path d="M36.500 453.500 v1" stroke="#ecb22e"/>
<path d="M29.500 446.500 v8" stroke="#e01e5a"/><path d="M22 446.500 h1" stroke="#e01e5a"/>
</g>
<!-- chrome -->
<circle cx="5" cy="506" r="2.6" fill="#e95420"/>
<circle cx="33" cy="507" r="22" fill="#db4437"/>
<path d="M33 507 L13.900 518 A22 22 0 0 0 33 529 L44 510Z" fill="#0f9d58"/>
<path d="M33 507 L13.950 496 A22 22 0 0 0 13.950 518 L26 512Z" fill="#0f9d58"/>
<path d="M33 529 A22 22 0 0 0 52.050 496 L33 496 L42.500 512.500Z" fill="#ffcd40"/>
<path d="M13.950 496 A22 22 0 0 1 52.050 496 L33 496 L23.500 512.500Z" fill="#db4437"/>
<circle cx="33" cy="507" r="10.200" fill="#fff"/><circle cx="33" cy="507" r="8.200" fill="#4285f4"/>
<!-- zotero -->
<path d="M33 547 L53 558 V582 L33 593 L13 582 V558Z" fill="#e4e4e4" stroke="#c0c0c0" stroke-width="1"/>
<path d="M33 547 L53 558 L33 570 L13 558Z" fill="#f6f6f6"/><path d="M33 570 V593 L53 582 V558Z" fill="#cfcfcf"/>
<path d="M22 556 h22 v5.500 l-13 17 h13 v6.500 h-23 v-5.500 l13 -17 h-12z" fill="#cc2020"/>
<!-- y app -->
<circle cx="33.500" cy="640" r="18.800" fill="url(#globe2)"/>
<path d="M26 616 q6 -4 8 6 q2 10 5 14 q6 -10 8 -24 M47 612 q-2 24 -14 38 q-6 7 -15 7" fill="none" stroke="#0c0c0c" stroke-width="3.800" stroke-linecap="round"/>
<!-- terminal -->
<rect x="10.500" y="682.500" width="45" height="36.500" rx="2" fill="#d4d4d4" stroke="#9a9a9a" stroke-width="1"/>
<rect x="14" y="686" width="38" height="29" fill="#2b2b2b"/><rect x="14" y="686" width="38" height="8" fill="#3a3a3a" opacity=".5"/>
<path d="M19 692 l6 3.500 l-6 3.500" fill="none" stroke="#fff" stroke-width="2.200"/><rect x="27" y="701" width="8" height="2.200" fill="#fff"/>
<!-- notes -->
<circle cx="5" cy="759" r="2.600" fill="#e95420"/><circle cx="5" cy="767" r="2.600" fill="#e95420"/>
<path d="M19 754 h30 l5 19 h-41z" fill="#f4e03a"/><path d="M13 773 h41 v9 h-41z" fill="#e8c81c"/><path d="M13 776 h41 M13 779 h41" stroke="#f6e46a" stroke-width="1"/>
<path d="M26 765 l20 -20 l4 4 l-20 20 l-6 2z" fill="#d89a3a" stroke="#8a5a1a" stroke-width=".8"/><path d="M46 745 l3 -2.500 l4 4 l-3 2.500z" fill="#e84a4a"/><path d="M24 771 l2 -6 l4 4z" fill="#3a2a1a"/>
<!-- image viewer -->
<circle cx="5" cy="823" r="2.600" fill="#e95420"/><circle cx="5" cy="831" r="2.600" fill="#e95420"/>
<g transform="rotate(-10 27 822)"><rect x="13" y="807" width="30" height="30" fill="#f2f2ee" stroke="#cfcfc8" stroke-width="1"/><rect x="15.500" y="809.500" width="25" height="21" fill="#8ab83a"/><circle cx="25" cy="820" r="6" fill="#fff"/><circle cx="25" cy="820" r="2.400" fill="#f0a01c"/></g>
<circle cx="37" cy="829" r="10.500" fill="rgba(255,255,255,.45)" stroke="#2a2a2a" stroke-width="3.200"/>
<path d="M45 837.500 l9 9.500" stroke="#d88a2a" stroke-width="3.600" stroke-linecap="round"/>
<!-- inkscape -->
<circle cx="5" cy="891" r="2.600" fill="#e95420"/>
<path d="M33 868.500 L55 890 Q55 893 50 894 L40 896 Q36 898 40 901 L43 904 Q40 908 36 906 Q34 912 30 911 Q26 906 28 903 Q22 903 20 900 Q24 896 28 896 L16 894 Q10 893 11 890Z" fill="#0a0a0a"/>
<path d="M33 871 L47 885 L42 883 L38 886 L34 881 L30 885 L25 882 L19 886Z" fill="#e8e8f0"/>
<ellipse cx="50" cy="903" rx="2.200" ry="1.400" fill="#0a0a0a"/><ellipse cx="22" cy="906" rx="2" ry="1.300" fill="#0a0a0a"/>
<!-- grid -->
<g fill="#eeeae6"><circle cx="21" cy="1036" r="3.100"/><circle cx="33" cy="1036" r="3.100"/><circle cx="45" cy="1036" r="3.100"/><circle cx="21" cy="1048" r="3.100"/><circle cx="33" cy="1048" r="3.100"/><circle cx="45" cy="1048" r="3.100"/><circle cx="21" cy="1060" r="3.100"/><circle cx="33" cy="1060" r="3.100"/><circle cx="45" cy="1060" r="3.100"/></g>
</svg>
</div>
</body></html>
